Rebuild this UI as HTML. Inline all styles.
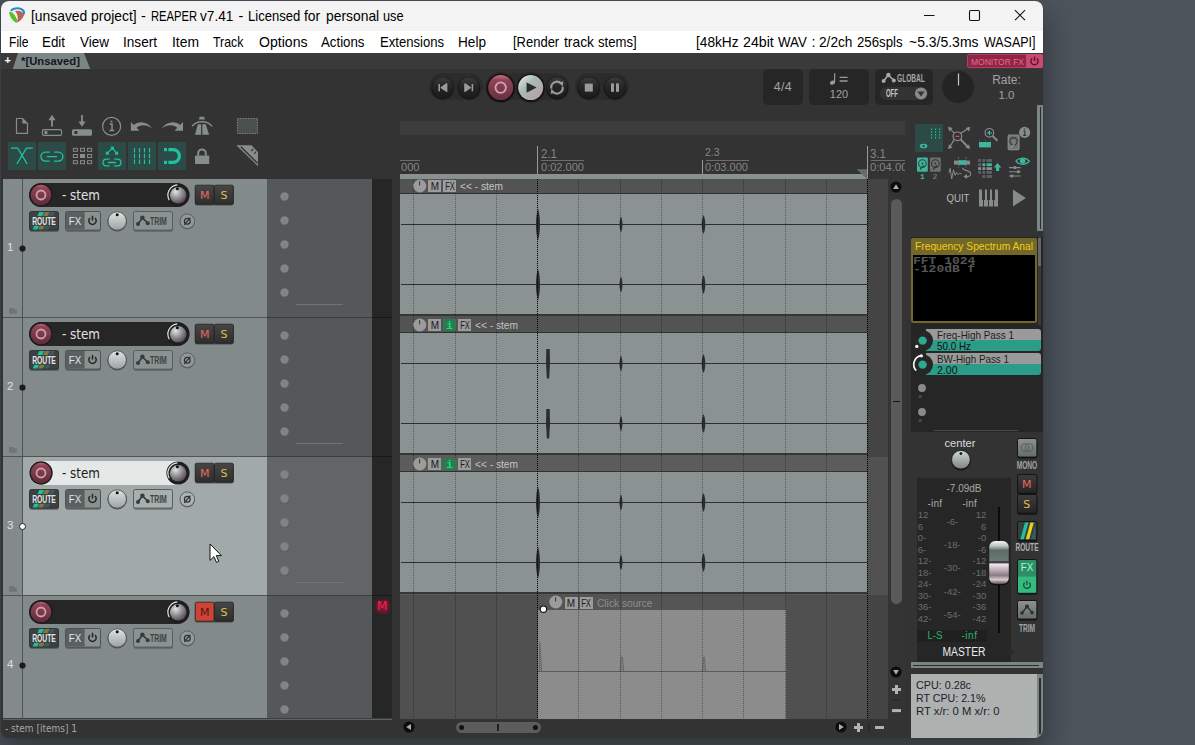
<!DOCTYPE html>
<html lang="en"><head><meta charset="utf-8"><title>[unsaved project] - REAPER v7.41</title>
<style>
html,body{margin:0;padding:0}
body{width:1195px;height:745px;overflow:hidden;background:#4d545c;position:relative;font-family:"Liberation Sans",sans-serif}
#win{position:absolute;left:1px;top:1px;width:1042px;height:737px;border-radius:8px;overflow:hidden;background:#333;box-shadow:0 12px 32px 3px rgba(0,0,0,.36),0 0 1px rgba(0,0,0,.3)}
#o{position:absolute;left:-1px;top:-1px;width:1195px;height:745px}
#o div,#o svg{position:absolute;box-sizing:border-box}
#o svg{overflow:visible}
.t{margin:0;padding:0}
</style></head><body>
<div id="win"><div id="o">
<div style="left:0px;top:0px;width:1195px;height:31px;background:#f3f3f3;"></div>
<svg style="left:9px;top:7px;" width="16" height="16" viewBox="0 0 16 16">
<path d="M1.200 3.400 C3.500 -0.600 12 -1.200 15.400 3.200 C16 4.400 16.100 6 15.800 7.500 L14 6.800 C14.200 5.400 13.600 4.400 12.600 3.600 C9.600 1.400 5.400 1.800 2.800 4.200 Z" fill="#1f8ad0"/>
<path d="M0.300 4.600 C2.500 4.200 6 7.600 8 12.400 C8.200 14 7.600 15.400 7 15.800 C4 14.600 -0.200 9 0.300 4.600 Z" fill="#5cc02c"/>
<path d="M6.100 4.300 C9.600 3 13.600 4.400 15.200 7.600 C14.400 11 11 14.600 7.400 16 C9.400 12 9.400 8 6.100 4.300 Z" fill="#ba634f"/>
</svg>
<div id="title0" class="t" style="top:6.75px;font:normal 14.5px/18.5px 'Liberation Sans',sans-serif;color:#000;white-space:nowrap;left:30.9px;transform:scaleX(0.9562);transform-origin:0 50%;">[unsaved project]</div>
<div id="title1" class="t" style="top:6.75px;font:normal 14.5px/18.5px 'Liberation Sans',sans-serif;color:#000;white-space:nowrap;left:140.9px;">-</div>
<div id="title2" class="t" style="top:6.75px;font:normal 14.5px/18.5px 'Liberation Sans',sans-serif;color:#000;white-space:nowrap;left:150.5px;transform:scaleX(0.7713);transform-origin:0 50%;">REAPER</div>
<div id="title3" class="t" style="top:6.75px;font:normal 14.5px/18.5px 'Liberation Sans',sans-serif;color:#000;white-space:nowrap;left:199.8px;transform:scaleX(0.9413);transform-origin:0 50%;">v7.41</div>
<div id="title4" class="t" style="top:6.75px;font:normal 14.5px/18.5px 'Liberation Sans',sans-serif;color:#000;white-space:nowrap;left:238.4px;">-</div>
<div id="title5" class="t" style="top:6.75px;font:normal 14.5px/18.5px 'Liberation Sans',sans-serif;color:#000;white-space:nowrap;left:247.6px;transform:scaleX(0.8993);transform-origin:0 50%;">Licensed</div>
<div id="title6" class="t" style="top:6.75px;font:normal 14.5px/18.5px 'Liberation Sans',sans-serif;color:#000;white-space:nowrap;left:304.4px;transform:scaleX(0.9573);transform-origin:0 50%;">for</div>
<div id="title7" class="t" style="top:6.75px;font:normal 14.5px/18.5px 'Liberation Sans',sans-serif;color:#000;white-space:nowrap;left:325.8px;transform:scaleX(0.9564);transform-origin:0 50%;">personal</div>
<div id="title8" class="t" style="top:6.75px;font:normal 14.5px/18.5px 'Liberation Sans',sans-serif;color:#000;white-space:nowrap;left:382.8px;transform:scaleX(0.8807);transform-origin:0 50%;">use</div>
<svg style="left:919px;top:5px;" width="110" height="22" viewBox="0 0 110 22">
<path d="M5 10.5 H15.5" stroke="#111" stroke-width="1.1" fill="none"/>
<rect x="50.5" y="5.5" width="10" height="10" rx="1.2" stroke="#111" stroke-width="1.1" fill="none"/>
<path d="M96 5.2 L106 15.2 M106 5.2 L96 15.2" stroke="#111" stroke-width="1.1" fill="none"/>
</svg>
<div style="left:0px;top:31px;width:1195px;height:22px;background:#fff;"></div>
<div id="menu0" class="t" style="top:32.75px;font:normal 14.5px/18.5px 'Liberation Sans',sans-serif;color:#000;white-space:nowrap;left:8.5px;transform:scaleX(0.8342);transform-origin:0 50%;">File</div>
<div id="menu1" class="t" style="top:32.75px;font:normal 14.5px/18.5px 'Liberation Sans',sans-serif;color:#000;white-space:nowrap;left:42px;transform:scaleX(0.92);transform-origin:0 50%;">Edit</div>
<div id="menu2" class="t" style="top:32.75px;font:normal 14.5px/18.5px 'Liberation Sans',sans-serif;color:#000;white-space:nowrap;left:79.5px;transform:scaleX(0.9303);transform-origin:0 50%;">View</div>
<div id="menu3" class="t" style="top:32.75px;font:normal 14.5px/18.5px 'Liberation Sans',sans-serif;color:#000;white-space:nowrap;left:122.5px;transform:scaleX(0.9375);transform-origin:0 50%;">Insert</div>
<div id="menu4" class="t" style="top:32.75px;font:normal 14.5px/18.5px 'Liberation Sans',sans-serif;color:#000;white-space:nowrap;left:171.5px;transform:scaleX(0.9573);transform-origin:0 50%;">Item</div>
<div id="menu5" class="t" style="top:32.75px;font:normal 14.5px/18.5px 'Liberation Sans',sans-serif;color:#000;white-space:nowrap;left:213px;transform:scaleX(0.8539);transform-origin:0 50%;">Track</div>
<div id="menu6" class="t" style="top:32.75px;font:normal 14.5px/18.5px 'Liberation Sans',sans-serif;color:#000;white-space:nowrap;left:258.5px;transform:scaleX(0.9703);transform-origin:0 50%;">Options</div>
<div id="menu7" class="t" style="top:32.75px;font:normal 14.5px/18.5px 'Liberation Sans',sans-serif;color:#000;white-space:nowrap;left:321px;transform:scaleX(0.9146);transform-origin:0 50%;">Actions</div>
<div id="menu8" class="t" style="top:32.75px;font:normal 14.5px/18.5px 'Liberation Sans',sans-serif;color:#000;white-space:nowrap;left:380px;transform:scaleX(0.9022);transform-origin:0 50%;">Extensions</div>
<div id="menu9" class="t" style="top:32.75px;font:normal 14.5px/18.5px 'Liberation Sans',sans-serif;color:#000;white-space:nowrap;left:458px;transform:scaleX(0.9387);transform-origin:0 50%;">Help</div>
<div id="menu10" class="t" style="top:32.75px;font:normal 14.5px/18.5px 'Liberation Sans',sans-serif;color:#000;white-space:nowrap;left:512.7px;transform:scaleX(0.8955);transform-origin:0 50%;">[Render</div>
<div id="menu11" class="t" style="top:32.75px;font:normal 14.5px/18.5px 'Liberation Sans',sans-serif;color:#000;white-space:nowrap;left:563.8px;transform:scaleX(0.9547);transform-origin:0 50%;">track</div>
<div id="menu12" class="t" style="top:32.75px;font:normal 14.5px/18.5px 'Liberation Sans',sans-serif;color:#000;white-space:nowrap;left:597.7px;transform:scaleX(0.9063);transform-origin:0 50%;">stems]</div>
<div id="menur0" class="t" style="top:32.75px;font:normal 14.5px/18.5px 'Liberation Sans',sans-serif;color:#000;white-space:nowrap;left:695.8px;transform:scaleX(0.9437);transform-origin:0 50%;">[48kHz</div>
<div id="menur1" class="t" style="top:32.75px;font:normal 14.5px/18.5px 'Liberation Sans',sans-serif;color:#000;white-space:nowrap;left:742.5px;transform:scaleX(0.9792);transform-origin:0 50%;">24bit</div>
<div id="menur2" class="t" style="top:32.75px;font:normal 14.5px/18.5px 'Liberation Sans',sans-serif;color:#000;white-space:nowrap;left:778px;transform:scaleX(0.9166);transform-origin:0 50%;">WAV</div>
<div id="menur3" class="t" style="top:32.75px;font:normal 14.5px/18.5px 'Liberation Sans',sans-serif;color:#000;white-space:nowrap;left:811.4px;">:</div>
<div id="menur4" class="t" style="top:32.75px;font:normal 14.5px/18.5px 'Liberation Sans',sans-serif;color:#000;white-space:nowrap;left:818.6px;transform:scaleX(0.9441);transform-origin:0 50%;">2/2ch</div>
<div id="menur5" class="t" style="top:32.75px;font:normal 14.5px/18.5px 'Liberation Sans',sans-serif;color:#000;white-space:nowrap;left:857.1px;transform:scaleX(0.9123);transform-origin:0 50%;">256spls</div>
<div id="menur6" class="t" style="top:32.75px;font:normal 14.5px/18.5px 'Liberation Sans',sans-serif;color:#000;white-space:nowrap;left:908.5px;transform:scaleX(0.9634);transform-origin:0 50%;">~5.3/5.3ms</div>
<div id="menur7" class="t" style="top:32.75px;font:normal 14.5px/18.5px 'Liberation Sans',sans-serif;color:#000;white-space:nowrap;left:983.9px;transform:scaleX(0.8599);transform-origin:0 50%;">WASAPI]</div>
<div style="left:0px;top:53px;width:1195px;height:16px;background:#3a3a3a;"></div>
<svg style="left:0px;top:53px;" width="100" height="16" viewBox="0 0 100 16"><path d="M18 0 H84 L90.2 16 H12.8 Z" fill="#7c8685"/></svg>
<div id="t31" class="t" style="top:53.3px;font:bold 11px/15px 'Liberation Sans',sans-serif;color:#fff;white-space:nowrap;left:4.6px;">+</div>
<div id="tab" class="t" style="top:53.9px;font:bold 11px/15px 'Liberation Sans',sans-serif;color:#15151f;white-space:nowrap;left:20.8px;transform:scaleX(1.0266);transform-origin:0 50%;">*[Unsaved]</div>
<div style="left:967px;top:54px;width:75.5px;height:14px;background:#8a2845;border-radius:2px;border:1px solid #b83a5e;"></div>
<div style="left:1026px;top:54px;width:16.5px;height:14px;background:#c84a70;border-radius:0 2px 2px 0;"></div>
<div id="monfx" class="t" style="top:54.55px;font:normal 9.5px/13.5px 'Liberation Sans',sans-serif;color:#f2668e;white-space:nowrap;left:971px;transform:scaleX(0.8912);transform-origin:0 50%;">MONITOR FX</div>
<svg style="left:1028px;top:55px;" width="13" height="12" viewBox="0 0 13 12"><path d="M4.2 3.4 A3.6 3.6 0 1 0 8.8 3.4" stroke="#5a1028" stroke-width="1.3" fill="none"/><path d="M6.5 1.6 V6" stroke="#5a1028" stroke-width="1.3"/></svg>
<svg style="left:420px;top:65px;" width="220" height="46" viewBox="0 0 220 46"><defs>
<linearGradient id="gdark" x1="0" y1="0" x2="0" y2="1"><stop offset="0" stop-color="#3a3a3a"/><stop offset="0.5" stop-color="#242424"/><stop offset="1" stop-color="#1c1c1c"/></linearGradient>
<linearGradient id="grec" x1="0" y1="0" x2="0" y2="1"><stop offset="0" stop-color="#c4707f"/><stop offset="0.2" stop-color="#8c4456"/><stop offset="1" stop-color="#663040"/></linearGradient>
<linearGradient id="gplay" x1="0" y1="0" x2="1" y2="1"><stop offset="0" stop-color="#e8f0ee"/><stop offset="0.4" stop-color="#a8bab4"/><stop offset="1" stop-color="#b89aa8"/></linearGradient>
</defs><rect x="9" y="8" width="54" height="27" rx="13.5" fill="#2c2c2c"/><rect x="66" y="8" width="82" height="27" rx="13.5" fill="#2c2c2c"/><rect x="155" y="8" width="54" height="27" rx="13.5" fill="#2c2c2c"/><circle cx="22.6" cy="22.6" r="12.799999999999999" fill="#2a2a2a"/><circle cx="22.6" cy="23.200000000000003" r="11.2" fill="#161616"/><circle cx="22.6" cy="22.6" r="10.399999999999999" fill="url(#gdark)"/><path d="M19.2 19 V26.2 M26.6 19 L21.4 22.6 L26.6 26.2 Z" fill="#9a9a9a" stroke="#9a9a9a" stroke-width="1.6" stroke-linejoin="round"/><circle cx="49" cy="22.6" r="12.799999999999999" fill="#2a2a2a"/><circle cx="49" cy="23.200000000000003" r="11.2" fill="#161616"/><circle cx="49" cy="22.6" r="10.399999999999999" fill="url(#gdark)"/><path d="M52.4 19 V26.2 M45 19 L50.2 22.6 L45 26.2 Z" fill="#9a9a9a" stroke="#9a9a9a" stroke-width="1.6" stroke-linejoin="round"/><circle cx="137" cy="22.6" r="12.799999999999999" fill="#2a2a2a"/><circle cx="137" cy="23.200000000000003" r="11.2" fill="#161616"/><circle cx="137" cy="22.6" r="10.399999999999999" fill="url(#gdark)"/><path d="M131.400 23.600 A5.700 5.700 0 0 1 141.200 18.600 M142.600 21.600 A5.700 5.700 0 0 1 132.800 26.600" stroke="#9a9a9a" stroke-width="2.100" fill="none"/><path d="M138.600 17.200 L143.400 16.400 L142.600 21.400 Z M135.400 28 L130.600 28.800 L131.400 23.800 Z" fill="#9a9a9a"/><circle cx="80.7" cy="22.6" r="15.6" fill="#2a2a2a"/><circle cx="80.7" cy="22.900000000000002" r="14.2" fill="#141012"/><circle cx="80.7" cy="22.6" r="12.5" fill="url(#grec)"/><circle cx="80.7" cy="22.6" r="5.2" stroke="#d8a0b0" stroke-width="1.8" fill="none"/><circle cx="110.7" cy="22.6" r="15.6" fill="#2a2a2a"/><circle cx="110.7" cy="22.900000000000002" r="14.2" fill="#141414"/><circle cx="110.7" cy="22.6" r="12.5" fill="url(#gplay)"/><path d="M106.6 17.4 L116.6 22.6 L106.6 27.8 Z" fill="#2a2a2a"/><circle cx="168.8" cy="22.6" r="12.799999999999999" fill="#2a2a2a"/><circle cx="168.8" cy="23.200000000000003" r="11.2" fill="#161616"/><circle cx="168.8" cy="22.6" r="10.399999999999999" fill="url(#gdark)"/><rect x="164.8" y="18.6" width="8" height="8" fill="#9a9a9a"/><circle cx="195" cy="22.6" r="12.799999999999999" fill="#2a2a2a"/><circle cx="195" cy="23.200000000000003" r="11.2" fill="#161616"/><circle cx="195" cy="22.6" r="10.399999999999999" fill="url(#gdark)"/><rect x="191" y="18.4" width="3" height="8.4" fill="#9a9a9a"/><rect x="196" y="18.4" width="3" height="8.4" fill="#9a9a9a"/></svg>
<div style="left:763px;top:69px;width:40px;height:36px;background:#262626;border-radius:5px;"></div>
<div id="ts44" class="t" style="top:78.75px;font:normal 12.5px/16.5px 'Liberation Sans',sans-serif;color:#a2a2a2;white-space:nowrap;left:633px;width:300px;text-align:center;transform:scaleX(1);transform-origin:50% 50%;letter-spacing:0.303px;">4/4</div>
<div style="left:809px;top:69px;width:60px;height:36px;background:#262626;border-radius:5px;"></div>
<svg style="left:828px;top:72px;" width="24" height="14" viewBox="0 0 24 14"><ellipse cx="4.4" cy="10.6" rx="2.6" ry="2" fill="#9a9a9a" transform="rotate(-20 4.4 10.6)"/><path d="M6.6 10.4 V1.2" stroke="#9a9a9a" stroke-width="1.2"/><path d="M11.6 5.4 H19.6 M11.6 9 H19.6" stroke="#9a9a9a" stroke-width="1.3"/></svg>
<div id="t35" class="t" style="top:87.0px;font:normal 11px/15px 'Liberation Sans',sans-serif;color:#a2a2a2;white-space:nowrap;left:689px;width:300px;text-align:center;">120</div>
<div style="left:875px;top:69px;width:57.5px;height:36px;background:#262626;border-radius:5px;"></div>
<svg style="left:881px;top:72px;" width="18" height="12" viewBox="0 0 18 12"><path d="M2.6 9 L7.2 3.2 L12.6 8" stroke="#a8a8a8" stroke-width="1.6" fill="none"/><circle cx="2.6" cy="9" r="2" fill="#a8a8a8"/><circle cx="7.4" cy="3" r="2.2" fill="#a8a8a8"/><circle cx="12.8" cy="8.4" r="2" fill="#a8a8a8"/></svg>
<div id="t36" class="t" style="top:71.7px;font:bold 10px/14px 'Liberation Sans',sans-serif;color:#a8a8a8;white-space:nowrap;left:897px;transform:scaleX(0.66);transform-origin:0 50%;">GLOBAL</div>
<div style="left:880px;top:87px;width:48px;height:13px;background:#333;border-radius:6.5px;"></div>
<div id="t37" class="t" style="top:86.35px;font:bold 10.5px/14.5px 'Liberation Sans',sans-serif;color:#c8c8c8;white-space:nowrap;left:885.7px;transform:scaleX(0.56);transform-origin:0 50%;">OFF</div>
<svg style="left:914px;top:87px;" width="14" height="13" viewBox="0 0 14 13"><circle cx="7" cy="6.5" r="6" fill="#8a8a8a"/><path d="M3.4 4.6 H10.6 L7 9.6 Z" fill="#333"/></svg>
<svg style="left:940px;top:69px;" width="36" height="36" viewBox="0 0 36 36"><circle cx="18" cy="18" r="16" fill="#242424"/><path d="M18.5 4.4 V16.4" stroke="#c8c8c8" stroke-width="1.2"/></svg>
<div id="t38" class="t" style="top:71.5px;font:normal 12px/16px 'Liberation Sans',sans-serif;color:#a2a2a2;white-space:nowrap;left:856.5px;width:300px;text-align:center;">Rate:</div>
<div id="t39" class="t" style="top:88.25px;font:normal 11.5px/15.5px 'Liberation Sans',sans-serif;color:#a2a2a2;white-space:nowrap;left:856.5px;width:300px;text-align:center;">1.0</div>
<svg style="left:8px;top:112px;" width="28" height="28" viewBox="0 0 28 28"><path d="M8.5 6.5 H14.6 L19.5 11.4 V21.4 H8.5 Z" stroke="#878d8d" stroke-width="1.2" fill="none"/><path d="M14.4 6.4 V11.6 H19.6 Z" fill="#878d8d"/></svg>
<svg style="left:38px;top:112px;" width="28" height="28" viewBox="0 0 28 28"><path d="M14 14.5 V6" stroke="#878d8d" stroke-width="1.8"/><path d="M10.4 8.2 L14 2.8 L17.6 8.2 Z" fill="#878d8d"/><rect x="4.4" y="17.6" width="19.2" height="5.8" rx="1.6" stroke="#878d8d" stroke-width="1.2" fill="none"/><rect x="6.4" y="19" width="3" height="3" fill="#878d8d"/></svg>
<svg style="left:68px;top:112px;" width="28" height="28" viewBox="0 0 28 28"><path d="M14 3 V11" stroke="#878d8d" stroke-width="1.8"/><path d="M10.4 9.4 L14 14.8 L17.6 9.4 Z" fill="#878d8d"/><rect x="4" y="17.2" width="20" height="6.6" rx="1.6" fill="#878d8d"/><rect x="6.4" y="19" width="3" height="3" fill="#333"/></svg>
<svg style="left:98px;top:112px;" width="28" height="28" viewBox="0 0 28 28"><circle cx="13.6" cy="14.4" r="9" stroke="#878d8d" stroke-width="1.2" fill="none"/><path d="M11.6 12 H14 V18.4 M11.4 18.6 H16.2" stroke="#878d8d" stroke-width="1.5" fill="none"/><rect x="12.6" y="8.6" width="1.8" height="1.8" fill="#878d8d"/></svg>
<svg style="left:128px;top:112px;" width="28" height="28" viewBox="0 0 28 28"><path d="M2.900 10.100 V18.800 H11.400 L8.600 15.800 C12 12.400 18 12.200 24.300 16.400 C19.500 9.600 11 8.400 5.800 13 Z" fill="#878d8d"/></svg>
<svg style="left:158px;top:112px;" width="28" height="28" viewBox="0 0 28 28"><path d="M25 10.100 V18.800 H16.500 L19.300 15.800 C15.900 12.400 9.900 12.200 3.600 16.400 C8.400 9.600 16.900 8.400 22.100 13 Z" fill="#878d8d"/></svg>
<svg style="left:188px;top:112px;" width="28" height="28" viewBox="0 0 28 28"><path d="M4 14.400 C8.400 8.200 19.600 8.200 24 14.400" stroke="#878d8d" stroke-width="1.3" fill="none"/><path d="M11.600 4.800 H16.200 L16.800 7.600 H11 Z" fill="#878d8d"/><path d="M9.800 12.200 H13.100 V22.700 H7 Z M14.300 12.200 H17.700 L21.100 22.700 H14.300 Z" fill="#878d8d"/></svg>
<svg style="left:237px;top:118px;" width="21" height="16" viewBox="0 0 21 16"><rect x="0.5" y="0.5" width="20" height="15" fill="#4b4f4f" stroke="#858585" stroke-width="1" stroke-dasharray="1.4 1.2"/></svg>
<svg style="left:8px;top:142px;" width="28" height="28" viewBox="0 0 28 28"><rect x="0" y="0" width="28" height="28" fill="#2d4b46"/><path d="M3 6.1 H9.7 L19.1 21.9 M24.8 6.1 H18.5 L8.9 21.9" stroke="#1dc2a0" stroke-width="1.25" fill="none"/></svg>
<svg style="left:38px;top:142px;" width="28" height="28" viewBox="0 0 28 28"><rect x="0" y="0" width="28" height="28" fill="#2d4b46"/><path d="M11.7 10.100 H7.4 A4.5 4.5 0 0 0 7.4 19.100 H11.700 M16 10.100 H20.4 A4.5 4.5 0 0 1 20.4 19.100 H16 M8.900 14.600 H19" stroke="#1dc2a0" stroke-width="1.35" fill="none"/></svg>
<svg style="left:68px;top:142px;" width="28" height="28" viewBox="0 0 28 28"><rect x="5.4" y="6.3" width="4" height="3" stroke="#878d8d" stroke-width="1" fill="none"/><rect x="12.5" y="6.3" width="4" height="3" stroke="#878d8d" stroke-width="1" fill="none"/><rect x="19.6" y="6.3" width="4" height="3" stroke="#878d8d" stroke-width="1" fill="none"/><rect x="5.4" y="12.5" width="4" height="3" stroke="#878d8d" stroke-width="1" fill="none"/><rect x="12.0" y="12.0" width="5" height="4" fill="#878d8d"/><rect x="19.6" y="12.5" width="4" height="3" stroke="#878d8d" stroke-width="1" fill="none"/><rect x="5.4" y="18.7" width="4" height="3" stroke="#878d8d" stroke-width="1" fill="none"/><rect x="12.5" y="18.7" width="4" height="3" stroke="#878d8d" stroke-width="1" fill="none"/><rect x="19.6" y="18.7" width="4" height="3" stroke="#878d8d" stroke-width="1" fill="none"/></svg>
<svg style="left:98px;top:142px;" width="28" height="28" viewBox="0 0 28 28"><rect x="0" y="0" width="28" height="28" fill="#2d4b46"/><path d="M9.300 11.200 L14.400 6.100 L18.600 11.200" stroke="#1dc2a0" stroke-width="1.2" fill="none"/><rect x="12.900" y="4.600" width="3" height="3" fill="#1dc2a0"/><rect x="7.800" y="9.700" width="3" height="3" fill="#1dc2a0"/><rect x="17.100" y="9.700" width="3" height="3" fill="#1dc2a0"/><path d="M11.600 17.100 H8.400 A3.400 3.400 0 0 0 8.400 23.900 H11.600 M16.200 17.100 H19.500 A3.400 3.400 0 0 1 19.500 23.900 H16.200 M10 20.500 H18" stroke="#1dc2a0" stroke-width="1.3" fill="none"/></svg>
<svg style="left:128px;top:142px;" width="28" height="28" viewBox="0 0 28 28"><rect x="0" y="0" width="28" height="28" fill="#2d4b46"/><path d="M6.5 6 V22.200" stroke="#1dc2a0" stroke-width="1.2" stroke-dasharray="4.400 1.400"/><path d="M11.5 6 V22.200" stroke="#1dc2a0" stroke-width="1.2" stroke-dasharray="4.400 1.400"/><path d="M16.5 6 V22.200" stroke="#1dc2a0" stroke-width="1.2" stroke-dasharray="4.400 1.400"/><path d="M21.5 6 V22.200" stroke="#1dc2a0" stroke-width="1.2" stroke-dasharray="4.400 1.400"/></svg>
<svg style="left:158px;top:142px;" width="28" height="28" viewBox="0 0 28 28"><rect x="0" y="0" width="28" height="28" fill="#2d4b46"/><path d="M10.4 7.6 H15 A6.4 6.4 0 0 1 15 20.4 H10.4" stroke="#1dc2a0" stroke-width="3.2" fill="none"/><rect x="6" y="6" width="3" height="3.2" fill="#1dc2a0"/><rect x="6" y="18.8" width="3" height="3.2" fill="#1dc2a0"/></svg>
<svg style="left:188px;top:142px;" width="28" height="28" viewBox="0 0 28 28"><rect x="7" y="13.400" width="14.200" height="8.700" rx="0.800" fill="#878d8d"/><path d="M10.200 13.600 V11.200 A3.800 3.800 0 0 1 17.800 11.200 V13.600" stroke="#878d8d" stroke-width="2" fill="none"/></svg>
<svg style="left:236px;top:144px;" width="24" height="24" viewBox="0 0 24 24"><path d="M0.300 1.300 H15.500 L22 8 V22.300 Z" fill="#878d8d"/><path d="M4.800 2.700 L21.500 19.200" stroke="#333" stroke-width="1.4"/><path d="M15.200 7 L17.400 4.800 M18 9.800 L20.200 7.600" stroke="#333" stroke-width="1.1"/></svg>
<svg width="0" height="0" style="left:0;top:0"><defs>
<radialGradient id="kvol" cx="0.35" cy="0.3" r="0.8"><stop offset="0" stop-color="#e0e4e4"/><stop offset="0.45" stop-color="#94969a"/><stop offset="1" stop-color="#4c3c46"/></radialGradient>
<linearGradient id="kpan" x1="0" y1="0" x2="0" y2="1"><stop offset="0" stop-color="#dfe3e2"/><stop offset="1" stop-color="#9ba3a2"/></linearGradient>
<linearGradient id="krec" x1="0" y1="0" x2="0" y2="1"><stop offset="0" stop-color="#c46674"/><stop offset="0.14" stop-color="#904456"/><stop offset="0.5" stop-color="#7a3a4a"/><stop offset="1" stop-color="#5e2c3a"/></linearGradient>
<linearGradient id="gms" x1="0" y1="0" x2="0" y2="1"><stop offset="0" stop-color="#464646"/><stop offset="1" stop-color="#2e2e2e"/></linearGradient>
</defs></svg>
<div style="left:3px;top:179px;width:389px;height:540px;background:#333;"></div>
<div style="left:3px;top:179px;width:19px;height:138px;background:#838b8a;"></div>
<div style="left:22px;top:179px;width:1px;height:138px;background:#4f5554;"></div>
<div style="left:23px;top:179px;width:244px;height:138px;background:#838b8a;"></div>
<div style="left:267px;top:179px;width:105px;height:138px;background:#545858;"></div>
<div style="left:372px;top:179px;width:20px;height:138px;background:#262626;"></div>
<div style="left:3px;top:317px;width:264px;height:1px;background:#4f5554;"></div>
<div style="left:267px;top:317px;width:105px;height:1px;background:#3a3e3e;"></div>
<div style="left:372px;top:317px;width:20px;height:1px;background:#191919;"></div>
<div id="t40" class="t" style="top:240.25px;font:normal 11.5px/15.5px 'Liberation Sans',sans-serif;color:#dde1e1;white-space:nowrap;left:7px;">1</div>
<svg style="left:18px;top:243.6px;" width="9" height="9" viewBox="0 0 9 9"><circle cx="4.5" cy="4.5" r="3.1" fill="#1c1c1c"/></svg>
<svg style="left:9px;top:308px;" width="8" height="6" viewBox="0 0 8 6"><path d="M0 0.100 H4 L5.600 1.500 H7.900 V5.800 H0 Z" fill="#6e7675"/></svg>
<div style="left:29px;top:183px;width:160px;height:24px;background:#262626;border-radius:12px;"></div>
<svg style="left:29px;top:183px;" width="24" height="24" viewBox="0 0 24 24"><circle cx="12" cy="12" r="11.700" fill="#1c1c1c"/><circle cx="12" cy="12" r="10.300" fill="url(#krec)"/><circle cx="12" cy="12" r="4.5" stroke="#cfa0ac" stroke-width="1.8" fill="none"/></svg>
<div id="tn0" class="t" style="top:186.0px;font:normal 14px/18px 'DejaVu Sans','Liberation Sans',sans-serif;color:#e2e2e2;white-space:nowrap;left:62px;transform:scaleX(0.853);transform-origin:0 50%;">- stem</div>
<svg style="left:165.5px;top:183px;" width="24" height="24" viewBox="0 0 24 24"><circle cx="12" cy="12" r="11.6" fill="#1e1e1e"/><circle cx="12.2" cy="12.300" r="8.300" fill="url(#kvol)"/><path d="M3.300 17.200 A10.200 10.200 0 0 1 11.400 1.900" stroke="#e8e8e8" stroke-width="1.2" fill="none"/><circle cx="11.400" cy="5.700" r="1.500" fill="#111"/></svg>
<svg style="left:195px;top:185px;" width="40" height="21" viewBox="0 0 40 21"><rect x="0" y="1" width="38.6" height="19.6" rx="2" fill="#1a1a1a" opacity="0.55"/><rect x="0.2" y="0.200" width="19" height="19" rx="1.5" fill="url(#gms)" stroke="#222" stroke-width="0.8"/><rect x="19.4" y="0.200" width="19" height="19" rx="1.5" fill="url(#gms)" stroke="#222" stroke-width="0.8"/></svg>
<div id="t42" class="t" style="top:187.5px;font:normal 11px/15px 'DejaVu Sans','Liberation Sans',sans-serif;color:#e46a5e;white-space:nowrap;left:54.69999999999999px;width:300px;text-align:center;">M</div>
<div id="t43" class="t" style="top:187.5px;font:normal 11px/15px 'DejaVu Sans','Liberation Sans',sans-serif;color:#e0c050;white-space:nowrap;left:74px;width:300px;text-align:center;">S</div>
<svg style="left:29px;top:211px;" width="31" height="21" viewBox="0 0 31 21"><rect x="0.5" y="1.4" width="29.4" height="19.4" rx="2" fill="#2a2e2e" opacity="0.6"/><rect x="0.5" y="0.5" width="29" height="18.6" rx="1.8" fill="#3b4040" stroke="#2a2d2d" stroke-width="0.8"/><path d="M10.2 1 H15 L13.2 5 H8.400 Z" fill="#1dbf9f"/><path d="M15.8 1 H20.6 L18.8 5 H14 Z" fill="#7d7a3c"/><path d="M21.4 1 H26 L24.2 5 H19.6 Z" fill="#3a5a66"/><path d="M5.200 14.800 H10 L8.400 18.600 H3.600 Z" fill="#1dbf9f"/><path d="M10.800 14.800 H15.600 L14 18.600 H9.200 Z" fill="#7d7a3c"/><path d="M16.400 14.800 H21.200 L19.600 18.600 H14.800 Z" fill="#3a5a66"/></svg>
<div id="t44" class="t" style="top:213.85px;font:bold 11.5px/15.5px 'Liberation Sans',sans-serif;color:#e4e4e4;white-space:nowrap;left:-106px;width:300px;text-align:center;transform:scaleX(0.59);transform-origin:50% 50%;">ROUTE</div>
<svg style="left:65px;top:211px;" width="37" height="21" viewBox="0 0 37 21"><rect x="0.5" y="1.4" width="35.4" height="19.4" rx="2" fill="#3a3e3e" opacity="0.55"/><rect x="0.5" y="0.5" width="35" height="18.6" rx="1.8" fill="#8a9291" stroke="#4e5454" stroke-width="1"/><path d="M1 1 H19.6 V18.600 H1 Z" fill="#5a5f5f"/><path d="M25 7 A3.700 3.700 0 1 0 30 7" stroke="#222626" stroke-width="1.5" fill="none"/><path d="M27.5 4.800 V9.600" stroke="#222626" stroke-width="1.5"/></svg>
<div id="t45" class="t" style="top:213.65px;font:normal 11.5px/15.5px 'Liberation Sans',sans-serif;color:#e6e6e6;white-space:nowrap;left:-75px;width:300px;text-align:center;transform:scaleX(0.85);transform-origin:50% 50%;">FX</div>
<svg style="left:107px;top:211px;" width="21" height="21" viewBox="0 0 21 21"><circle cx="10.2" cy="10.6" r="9.8" fill="#4a504f"/><circle cx="10.2" cy="10" r="9.2" fill="url(#kpan)" stroke="#4a504f" stroke-width="0.8"/><circle cx="10.2" cy="3.800" r="1.5" fill="#111"/></svg>
<svg style="left:133px;top:211px;" width="41" height="21" viewBox="0 0 41 21"><rect x="0.5" y="1.4" width="39.4" height="19.4" rx="2" fill="#3a3e3e" opacity="0.5"/><rect x="0.5" y="0.5" width="39" height="18.6" rx="1.8" fill="#8b9392" stroke="#585e5d" stroke-width="1"/><path d="M5 13 L9.4 6.800 L14.6 12" stroke="#363c3c" stroke-width="1.7" fill="none"/><circle cx="5" cy="13" r="2" fill="#363c3c"/><circle cx="9.4" cy="6.6" r="2.200" fill="#363c3c"/><circle cx="14.8" cy="12.2" r="2" fill="#363c3c"/></svg>
<div id="t46" class="t" style="top:213.85px;font:bold 11.5px/15.5px 'Liberation Sans',sans-serif;color:#3c4242;white-space:nowrap;left:150.3px;transform:scaleX(0.6);transform-origin:0 50%;">TRIM</div>
<svg style="left:178.5px;top:212.5px;" width="17" height="17" viewBox="0 0 17 17"><circle cx="8.3" cy="8.800" r="7.6" fill="#4a504f" opacity="0.6"/><circle cx="8.3" cy="8.200" r="7.3" fill="#929a99" stroke="#5a605f" stroke-width="1"/><circle cx="8.3" cy="8.2" r="2.900" stroke="#2e3232" stroke-width="1.2" fill="none"/><path d="M5.200 11.800 L11.400 4.600" stroke="#2e3232" stroke-width="1.2"/></svg>
<svg style="left:279.5px;top:192.4px;" width="9" height="9" viewBox="0 0 9 9"><circle cx="4.5" cy="4.5" r="4.2" fill="#838383"/></svg>
<svg style="left:279.5px;top:216.4px;" width="9" height="9" viewBox="0 0 9 9"><circle cx="4.5" cy="4.5" r="4.2" fill="#838383"/></svg>
<svg style="left:279.5px;top:240.4px;" width="9" height="9" viewBox="0 0 9 9"><circle cx="4.5" cy="4.5" r="4.2" fill="#838383"/></svg>
<svg style="left:279.5px;top:264.4px;" width="9" height="9" viewBox="0 0 9 9"><circle cx="4.5" cy="4.5" r="4.2" fill="#838383"/></svg>
<svg style="left:279.5px;top:288.4px;" width="9" height="9" viewBox="0 0 9 9"><circle cx="4.5" cy="4.5" r="4.2" fill="#838383"/></svg>
<div style="left:296px;top:304px;width:47px;height:1px;background:#6f7474;"></div>
<div style="left:3px;top:318px;width:19px;height:138px;background:#838b8a;"></div>
<div style="left:22px;top:318px;width:1px;height:138px;background:#4f5554;"></div>
<div style="left:23px;top:318px;width:244px;height:138px;background:#838b8a;"></div>
<div style="left:267px;top:318px;width:105px;height:138px;background:#545858;"></div>
<div style="left:372px;top:318px;width:20px;height:138px;background:#262626;"></div>
<div style="left:3px;top:456px;width:264px;height:1px;background:#4f5554;"></div>
<div style="left:267px;top:456px;width:105px;height:1px;background:#3a3e3e;"></div>
<div style="left:372px;top:456px;width:20px;height:1px;background:#191919;"></div>
<div id="t47" class="t" style="top:379.25px;font:normal 11.5px/15.5px 'Liberation Sans',sans-serif;color:#dde1e1;white-space:nowrap;left:7px;">2</div>
<svg style="left:18px;top:382.6px;" width="9" height="9" viewBox="0 0 9 9"><circle cx="4.5" cy="4.5" r="3.1" fill="#1c1c1c"/></svg>
<svg style="left:9px;top:447px;" width="8" height="6" viewBox="0 0 8 6"><path d="M0 0.100 H4 L5.600 1.500 H7.900 V5.800 H0 Z" fill="#6e7675"/></svg>
<div style="left:29px;top:322px;width:160px;height:24px;background:#262626;border-radius:12px;"></div>
<svg style="left:29px;top:322px;" width="24" height="24" viewBox="0 0 24 24"><circle cx="12" cy="12" r="11.700" fill="#1c1c1c"/><circle cx="12" cy="12" r="10.300" fill="url(#krec)"/><circle cx="12" cy="12" r="4.5" stroke="#cfa0ac" stroke-width="1.8" fill="none"/></svg>
<div id="tn1" class="t" style="top:325.0px;font:normal 14px/18px 'DejaVu Sans','Liberation Sans',sans-serif;color:#e2e2e2;white-space:nowrap;left:62px;transform:scaleX(0.853);transform-origin:0 50%;">- stem</div>
<svg style="left:165.5px;top:322px;" width="24" height="24" viewBox="0 0 24 24"><circle cx="12" cy="12" r="11.6" fill="#1e1e1e"/><circle cx="12.2" cy="12.300" r="8.300" fill="url(#kvol)"/><path d="M3.300 17.200 A10.200 10.200 0 0 1 11.400 1.900" stroke="#e8e8e8" stroke-width="1.2" fill="none"/><circle cx="11.400" cy="5.700" r="1.500" fill="#111"/></svg>
<svg style="left:195px;top:324px;" width="40" height="21" viewBox="0 0 40 21"><rect x="0" y="1" width="38.6" height="19.6" rx="2" fill="#1a1a1a" opacity="0.55"/><rect x="0.2" y="0.200" width="19" height="19" rx="1.5" fill="url(#gms)" stroke="#222" stroke-width="0.8"/><rect x="19.4" y="0.200" width="19" height="19" rx="1.5" fill="url(#gms)" stroke="#222" stroke-width="0.8"/></svg>
<div id="t49" class="t" style="top:326.5px;font:normal 11px/15px 'DejaVu Sans','Liberation Sans',sans-serif;color:#e46a5e;white-space:nowrap;left:54.69999999999999px;width:300px;text-align:center;">M</div>
<div id="t50" class="t" style="top:326.5px;font:normal 11px/15px 'DejaVu Sans','Liberation Sans',sans-serif;color:#e0c050;white-space:nowrap;left:74px;width:300px;text-align:center;">S</div>
<svg style="left:29px;top:350px;" width="31" height="21" viewBox="0 0 31 21"><rect x="0.5" y="1.4" width="29.4" height="19.4" rx="2" fill="#2a2e2e" opacity="0.6"/><rect x="0.5" y="0.5" width="29" height="18.6" rx="1.8" fill="#3b4040" stroke="#2a2d2d" stroke-width="0.8"/><path d="M10.2 1 H15 L13.2 5 H8.400 Z" fill="#1dbf9f"/><path d="M15.8 1 H20.6 L18.8 5 H14 Z" fill="#7d7a3c"/><path d="M21.4 1 H26 L24.2 5 H19.6 Z" fill="#3a5a66"/><path d="M5.200 14.800 H10 L8.400 18.600 H3.600 Z" fill="#1dbf9f"/><path d="M10.800 14.800 H15.600 L14 18.600 H9.200 Z" fill="#7d7a3c"/><path d="M16.400 14.800 H21.200 L19.600 18.600 H14.800 Z" fill="#3a5a66"/></svg>
<div id="t51" class="t" style="top:352.85px;font:bold 11.5px/15.5px 'Liberation Sans',sans-serif;color:#e4e4e4;white-space:nowrap;left:-106px;width:300px;text-align:center;transform:scaleX(0.59);transform-origin:50% 50%;">ROUTE</div>
<svg style="left:65px;top:350px;" width="37" height="21" viewBox="0 0 37 21"><rect x="0.5" y="1.4" width="35.4" height="19.4" rx="2" fill="#3a3e3e" opacity="0.55"/><rect x="0.5" y="0.5" width="35" height="18.6" rx="1.8" fill="#8a9291" stroke="#4e5454" stroke-width="1"/><path d="M1 1 H19.6 V18.600 H1 Z" fill="#5a5f5f"/><path d="M25 7 A3.700 3.700 0 1 0 30 7" stroke="#222626" stroke-width="1.5" fill="none"/><path d="M27.5 4.800 V9.600" stroke="#222626" stroke-width="1.5"/></svg>
<div id="t52" class="t" style="top:352.65px;font:normal 11.5px/15.5px 'Liberation Sans',sans-serif;color:#e6e6e6;white-space:nowrap;left:-75px;width:300px;text-align:center;transform:scaleX(0.85);transform-origin:50% 50%;">FX</div>
<svg style="left:107px;top:350px;" width="21" height="21" viewBox="0 0 21 21"><circle cx="10.2" cy="10.6" r="9.8" fill="#4a504f"/><circle cx="10.2" cy="10" r="9.2" fill="url(#kpan)" stroke="#4a504f" stroke-width="0.8"/><circle cx="10.2" cy="3.800" r="1.5" fill="#111"/></svg>
<svg style="left:133px;top:350px;" width="41" height="21" viewBox="0 0 41 21"><rect x="0.5" y="1.4" width="39.4" height="19.4" rx="2" fill="#3a3e3e" opacity="0.5"/><rect x="0.5" y="0.5" width="39" height="18.6" rx="1.8" fill="#8b9392" stroke="#585e5d" stroke-width="1"/><path d="M5 13 L9.4 6.800 L14.6 12" stroke="#363c3c" stroke-width="1.7" fill="none"/><circle cx="5" cy="13" r="2" fill="#363c3c"/><circle cx="9.4" cy="6.6" r="2.200" fill="#363c3c"/><circle cx="14.8" cy="12.2" r="2" fill="#363c3c"/></svg>
<div id="t53" class="t" style="top:352.85px;font:bold 11.5px/15.5px 'Liberation Sans',sans-serif;color:#3c4242;white-space:nowrap;left:150.3px;transform:scaleX(0.6);transform-origin:0 50%;">TRIM</div>
<svg style="left:178.5px;top:351.5px;" width="17" height="17" viewBox="0 0 17 17"><circle cx="8.3" cy="8.800" r="7.6" fill="#4a504f" opacity="0.6"/><circle cx="8.3" cy="8.200" r="7.3" fill="#929a99" stroke="#5a605f" stroke-width="1"/><circle cx="8.3" cy="8.2" r="2.900" stroke="#2e3232" stroke-width="1.2" fill="none"/><path d="M5.200 11.800 L11.400 4.600" stroke="#2e3232" stroke-width="1.2"/></svg>
<svg style="left:279.5px;top:331.4px;" width="9" height="9" viewBox="0 0 9 9"><circle cx="4.5" cy="4.5" r="4.2" fill="#838383"/></svg>
<svg style="left:279.5px;top:355.4px;" width="9" height="9" viewBox="0 0 9 9"><circle cx="4.5" cy="4.5" r="4.2" fill="#838383"/></svg>
<svg style="left:279.5px;top:379.4px;" width="9" height="9" viewBox="0 0 9 9"><circle cx="4.5" cy="4.5" r="4.2" fill="#838383"/></svg>
<svg style="left:279.5px;top:403.4px;" width="9" height="9" viewBox="0 0 9 9"><circle cx="4.5" cy="4.5" r="4.2" fill="#838383"/></svg>
<svg style="left:279.5px;top:427.4px;" width="9" height="9" viewBox="0 0 9 9"><circle cx="4.5" cy="4.5" r="4.2" fill="#838383"/></svg>
<div style="left:296px;top:443px;width:47px;height:1px;background:#6f7474;"></div>
<div style="left:3px;top:457px;width:19px;height:138px;background:#838b8a;"></div>
<div style="left:22px;top:457px;width:1px;height:138px;background:#4f5554;"></div>
<div style="left:23px;top:457px;width:244px;height:138px;background:#a2aaa9;"></div>
<div style="left:267px;top:457px;width:105px;height:138px;background:#616565;"></div>
<div style="left:372px;top:457px;width:20px;height:138px;background:#262626;"></div>
<div style="left:3px;top:595px;width:264px;height:1px;background:#4f5554;"></div>
<div style="left:267px;top:595px;width:105px;height:1px;background:#3a3e3e;"></div>
<div style="left:372px;top:595px;width:20px;height:1px;background:#191919;"></div>
<div id="t54" class="t" style="top:518.25px;font:normal 11.5px/15.5px 'Liberation Sans',sans-serif;color:#dde1e1;white-space:nowrap;left:7px;">3</div>
<svg style="left:18px;top:521.6px;" width="9" height="9" viewBox="0 0 9 9"><circle cx="4.5" cy="4.5" r="3" fill="#fff" stroke="#222" stroke-width="1"/></svg>
<svg style="left:9px;top:586px;" width="8" height="6" viewBox="0 0 8 6"><path d="M0 0.100 H4 L5.600 1.500 H7.900 V5.800 H0 Z" fill="#6e7675"/></svg>
<div style="left:29px;top:461px;width:160px;height:24px;background:#e4e8e7;border-radius:12px;"></div>
<svg style="left:29px;top:461px;" width="24" height="24" viewBox="0 0 24 24"><circle cx="12" cy="12" r="11.700" fill="#1c1c1c"/><circle cx="12" cy="12" r="10.300" fill="url(#krec)"/><circle cx="12" cy="12" r="4.5" stroke="#cfa0ac" stroke-width="1.8" fill="none"/></svg>
<div id="tn2" class="t" style="top:464.0px;font:normal 14px/18px 'DejaVu Sans','Liberation Sans',sans-serif;color:#1c1c1c;white-space:nowrap;left:62px;transform:scaleX(0.853);transform-origin:0 50%;">- stem</div>
<svg style="left:165.5px;top:461px;" width="24" height="24" viewBox="0 0 24 24"><circle cx="12" cy="12" r="11.6" fill="#1e1e1e"/><circle cx="12.2" cy="12.300" r="8.300" fill="url(#kvol)"/><path d="M3.300 17.200 A10.200 10.200 0 0 1 11.400 1.900" stroke="#e8e8e8" stroke-width="1.2" fill="none"/><circle cx="11.400" cy="5.700" r="1.500" fill="#111"/></svg>
<svg style="left:195px;top:463px;" width="40" height="21" viewBox="0 0 40 21"><rect x="0" y="1" width="38.6" height="19.6" rx="2" fill="#1a1a1a" opacity="0.55"/><rect x="0.2" y="0.200" width="19" height="19" rx="1.5" fill="url(#gms)" stroke="#222" stroke-width="0.8"/><rect x="19.4" y="0.200" width="19" height="19" rx="1.5" fill="url(#gms)" stroke="#222" stroke-width="0.8"/></svg>
<div id="t56" class="t" style="top:465.5px;font:normal 11px/15px 'DejaVu Sans','Liberation Sans',sans-serif;color:#e46a5e;white-space:nowrap;left:54.69999999999999px;width:300px;text-align:center;">M</div>
<div id="t57" class="t" style="top:465.5px;font:normal 11px/15px 'DejaVu Sans','Liberation Sans',sans-serif;color:#e0c050;white-space:nowrap;left:74px;width:300px;text-align:center;">S</div>
<svg style="left:29px;top:489px;" width="31" height="21" viewBox="0 0 31 21"><rect x="0.5" y="1.4" width="29.4" height="19.4" rx="2" fill="#2a2e2e" opacity="0.6"/><rect x="0.5" y="0.5" width="29" height="18.6" rx="1.8" fill="#3b4040" stroke="#2a2d2d" stroke-width="0.8"/><path d="M10.2 1 H15 L13.2 5 H8.400 Z" fill="#1dbf9f"/><path d="M15.8 1 H20.6 L18.8 5 H14 Z" fill="#7d7a3c"/><path d="M21.4 1 H26 L24.2 5 H19.6 Z" fill="#3a5a66"/><path d="M5.200 14.800 H10 L8.400 18.600 H3.600 Z" fill="#1dbf9f"/><path d="M10.800 14.800 H15.600 L14 18.600 H9.200 Z" fill="#7d7a3c"/><path d="M16.400 14.800 H21.200 L19.600 18.600 H14.800 Z" fill="#3a5a66"/></svg>
<div id="t58" class="t" style="top:491.85px;font:bold 11.5px/15.5px 'Liberation Sans',sans-serif;color:#e4e4e4;white-space:nowrap;left:-106px;width:300px;text-align:center;transform:scaleX(0.59);transform-origin:50% 50%;">ROUTE</div>
<svg style="left:65px;top:489px;" width="37" height="21" viewBox="0 0 37 21"><rect x="0.5" y="1.4" width="35.4" height="19.4" rx="2" fill="#3a3e3e" opacity="0.55"/><rect x="0.5" y="0.5" width="35" height="18.6" rx="1.8" fill="#8a9291" stroke="#4e5454" stroke-width="1"/><path d="M1 1 H19.6 V18.600 H1 Z" fill="#5a5f5f"/><path d="M25 7 A3.700 3.700 0 1 0 30 7" stroke="#222626" stroke-width="1.5" fill="none"/><path d="M27.5 4.800 V9.600" stroke="#222626" stroke-width="1.5"/></svg>
<div id="t59" class="t" style="top:491.65px;font:normal 11.5px/15.5px 'Liberation Sans',sans-serif;color:#e6e6e6;white-space:nowrap;left:-75px;width:300px;text-align:center;transform:scaleX(0.85);transform-origin:50% 50%;">FX</div>
<svg style="left:107px;top:489px;" width="21" height="21" viewBox="0 0 21 21"><circle cx="10.2" cy="10.6" r="9.8" fill="#4a504f"/><circle cx="10.2" cy="10" r="9.2" fill="url(#kpan)" stroke="#4a504f" stroke-width="0.8"/><circle cx="10.2" cy="3.800" r="1.5" fill="#111"/></svg>
<svg style="left:133px;top:489px;" width="41" height="21" viewBox="0 0 41 21"><rect x="0.5" y="1.4" width="39.4" height="19.4" rx="2" fill="#3a3e3e" opacity="0.5"/><rect x="0.5" y="0.5" width="39" height="18.6" rx="1.8" fill="#a8b0af" stroke="#585e5d" stroke-width="1"/><path d="M5 13 L9.4 6.800 L14.6 12" stroke="#363c3c" stroke-width="1.7" fill="none"/><circle cx="5" cy="13" r="2" fill="#363c3c"/><circle cx="9.4" cy="6.6" r="2.200" fill="#363c3c"/><circle cx="14.8" cy="12.2" r="2" fill="#363c3c"/></svg>
<div id="t60" class="t" style="top:491.85px;font:bold 11.5px/15.5px 'Liberation Sans',sans-serif;color:#3c4242;white-space:nowrap;left:150.3px;transform:scaleX(0.6);transform-origin:0 50%;">TRIM</div>
<svg style="left:178.5px;top:490.5px;" width="17" height="17" viewBox="0 0 17 17"><circle cx="8.3" cy="8.800" r="7.6" fill="#4a504f" opacity="0.6"/><circle cx="8.3" cy="8.200" r="7.3" fill="#adb5b4" stroke="#5a605f" stroke-width="1"/><circle cx="8.3" cy="8.2" r="2.900" stroke="#2e3232" stroke-width="1.2" fill="none"/><path d="M5.200 11.800 L11.400 4.600" stroke="#2e3232" stroke-width="1.2"/></svg>
<svg style="left:279.5px;top:470.4px;" width="9" height="9" viewBox="0 0 9 9"><circle cx="4.5" cy="4.5" r="4.2" fill="#838383"/></svg>
<svg style="left:279.5px;top:494.4px;" width="9" height="9" viewBox="0 0 9 9"><circle cx="4.5" cy="4.5" r="4.2" fill="#838383"/></svg>
<svg style="left:279.5px;top:518.4px;" width="9" height="9" viewBox="0 0 9 9"><circle cx="4.5" cy="4.5" r="4.2" fill="#838383"/></svg>
<svg style="left:279.5px;top:542.4px;" width="9" height="9" viewBox="0 0 9 9"><circle cx="4.5" cy="4.5" r="4.2" fill="#838383"/></svg>
<svg style="left:279.5px;top:566.4px;" width="9" height="9" viewBox="0 0 9 9"><circle cx="4.5" cy="4.5" r="4.2" fill="#838383"/></svg>
<div style="left:296px;top:582px;width:47px;height:1px;background:#6f7474;"></div>
<div style="left:3px;top:596px;width:19px;height:122px;background:#838b8a;"></div>
<div style="left:22px;top:596px;width:1px;height:122px;background:#4f5554;"></div>
<div style="left:23px;top:596px;width:244px;height:122px;background:#838b8a;"></div>
<div style="left:267px;top:596px;width:105px;height:122px;background:#545858;"></div>
<div style="left:372px;top:596px;width:20px;height:122px;background:#262626;"></div>
<div id="t61" class="t" style="top:657.25px;font:normal 11.5px/15.5px 'Liberation Sans',sans-serif;color:#dde1e1;white-space:nowrap;left:7px;">4</div>
<svg style="left:18px;top:660.6px;" width="9" height="9" viewBox="0 0 9 9"><circle cx="4.5" cy="4.5" r="3.1" fill="#1c1c1c"/></svg>
<div style="left:29px;top:600px;width:160px;height:24px;background:#262626;border-radius:12px;"></div>
<svg style="left:29px;top:600px;" width="24" height="24" viewBox="0 0 24 24"><circle cx="12" cy="12" r="11.700" fill="#1c1c1c"/><circle cx="12" cy="12" r="10.300" fill="url(#krec)"/><circle cx="12" cy="12" r="4.5" stroke="#cfa0ac" stroke-width="1.8" fill="none"/></svg>
<svg style="left:165.5px;top:600px;" width="24" height="24" viewBox="0 0 24 24"><circle cx="12" cy="12" r="11.6" fill="#1e1e1e"/><circle cx="12.2" cy="12.300" r="8.300" fill="url(#kvol)"/><path d="M3.300 17.200 A10.200 10.200 0 0 1 11.400 1.900" stroke="#e8e8e8" stroke-width="1.2" fill="none"/><circle cx="11.400" cy="5.700" r="1.500" fill="#111"/></svg>
<svg style="left:195px;top:602px;" width="40" height="21" viewBox="0 0 40 21"><rect x="0" y="1" width="38.6" height="19.6" rx="2" fill="#1a1a1a" opacity="0.55"/><rect x="0.2" y="0.200" width="19" height="19" rx="1.5" fill="#cc4438" stroke="#222" stroke-width="0.8"/><rect x="19.4" y="0.200" width="19" height="19" rx="1.5" fill="url(#gms)" stroke="#222" stroke-width="0.8"/></svg>
<div id="t62" class="t" style="top:604.5px;font:normal 11px/15px 'DejaVu Sans','Liberation Sans',sans-serif;color:#5a1410;white-space:nowrap;left:54.69999999999999px;width:300px;text-align:center;">M</div>
<div id="t63" class="t" style="top:604.5px;font:normal 11px/15px 'DejaVu Sans','Liberation Sans',sans-serif;color:#e0c050;white-space:nowrap;left:74px;width:300px;text-align:center;">S</div>
<svg style="left:29px;top:628px;" width="31" height="21" viewBox="0 0 31 21"><rect x="0.5" y="1.4" width="29.4" height="19.4" rx="2" fill="#2a2e2e" opacity="0.6"/><rect x="0.5" y="0.5" width="29" height="18.6" rx="1.8" fill="#3b4040" stroke="#2a2d2d" stroke-width="0.8"/><path d="M10.2 1 H15 L13.2 5 H8.400 Z" fill="#1dbf9f"/><path d="M15.8 1 H20.6 L18.8 5 H14 Z" fill="#7d7a3c"/><path d="M21.4 1 H26 L24.2 5 H19.6 Z" fill="#3a5a66"/><path d="M5.200 14.800 H10 L8.400 18.600 H3.600 Z" fill="#1dbf9f"/><path d="M10.800 14.800 H15.600 L14 18.600 H9.200 Z" fill="#7d7a3c"/><path d="M16.400 14.800 H21.200 L19.600 18.600 H14.800 Z" fill="#3a5a66"/></svg>
<div id="t64" class="t" style="top:630.85px;font:bold 11.5px/15.5px 'Liberation Sans',sans-serif;color:#e4e4e4;white-space:nowrap;left:-106px;width:300px;text-align:center;transform:scaleX(0.59);transform-origin:50% 50%;">ROUTE</div>
<svg style="left:65px;top:628px;" width="37" height="21" viewBox="0 0 37 21"><rect x="0.5" y="1.4" width="35.4" height="19.4" rx="2" fill="#3a3e3e" opacity="0.55"/><rect x="0.5" y="0.5" width="35" height="18.6" rx="1.8" fill="#8a9291" stroke="#4e5454" stroke-width="1"/><path d="M1 1 H19.6 V18.600 H1 Z" fill="#5a5f5f"/><path d="M25 7 A3.700 3.700 0 1 0 30 7" stroke="#222626" stroke-width="1.5" fill="none"/><path d="M27.5 4.800 V9.600" stroke="#222626" stroke-width="1.5"/></svg>
<div id="t65" class="t" style="top:630.65px;font:normal 11.5px/15.5px 'Liberation Sans',sans-serif;color:#e6e6e6;white-space:nowrap;left:-75px;width:300px;text-align:center;transform:scaleX(0.85);transform-origin:50% 50%;">FX</div>
<svg style="left:107px;top:628px;" width="21" height="21" viewBox="0 0 21 21"><circle cx="10.2" cy="10.6" r="9.8" fill="#4a504f"/><circle cx="10.2" cy="10" r="9.2" fill="url(#kpan)" stroke="#4a504f" stroke-width="0.8"/><circle cx="10.2" cy="3.800" r="1.5" fill="#111"/></svg>
<svg style="left:133px;top:628px;" width="41" height="21" viewBox="0 0 41 21"><rect x="0.5" y="1.4" width="39.4" height="19.4" rx="2" fill="#3a3e3e" opacity="0.5"/><rect x="0.5" y="0.5" width="39" height="18.6" rx="1.8" fill="#8b9392" stroke="#585e5d" stroke-width="1"/><path d="M5 13 L9.4 6.800 L14.6 12" stroke="#363c3c" stroke-width="1.7" fill="none"/><circle cx="5" cy="13" r="2" fill="#363c3c"/><circle cx="9.4" cy="6.6" r="2.200" fill="#363c3c"/><circle cx="14.8" cy="12.2" r="2" fill="#363c3c"/></svg>
<div id="t66" class="t" style="top:630.85px;font:bold 11.5px/15.5px 'Liberation Sans',sans-serif;color:#3c4242;white-space:nowrap;left:150.3px;transform:scaleX(0.6);transform-origin:0 50%;">TRIM</div>
<svg style="left:178.5px;top:629.5px;" width="17" height="17" viewBox="0 0 17 17"><circle cx="8.3" cy="8.800" r="7.6" fill="#4a504f" opacity="0.6"/><circle cx="8.3" cy="8.200" r="7.3" fill="#929a99" stroke="#5a605f" stroke-width="1"/><circle cx="8.3" cy="8.2" r="2.900" stroke="#2e3232" stroke-width="1.2" fill="none"/><path d="M5.200 11.800 L11.400 4.600" stroke="#2e3232" stroke-width="1.2"/></svg>
<svg style="left:279.5px;top:609.4px;" width="9" height="9" viewBox="0 0 9 9"><circle cx="4.5" cy="4.5" r="4.2" fill="#838383"/></svg>
<svg style="left:279.5px;top:633.4px;" width="9" height="9" viewBox="0 0 9 9"><circle cx="4.5" cy="4.5" r="4.2" fill="#838383"/></svg>
<svg style="left:279.5px;top:657.4px;" width="9" height="9" viewBox="0 0 9 9"><circle cx="4.5" cy="4.5" r="4.2" fill="#838383"/></svg>
<svg style="left:279.5px;top:681.4px;" width="9" height="9" viewBox="0 0 9 9"><circle cx="4.5" cy="4.5" r="4.2" fill="#838383"/></svg>
<svg style="left:279.5px;top:705.4px;" width="9" height="9" viewBox="0 0 9 9"><circle cx="4.5" cy="4.5" r="4.2" fill="#838383"/></svg>
<div style="left:376.5px;top:600.5px;width:11px;height:11px;background:#6c1a2e;border-radius:3px;box-shadow:0 0 2.5px 1.5px rgba(108,26,46,.85);"></div>
<div id="t67" class="t" style="top:598.3px;font:normal 12px/16px 'DejaVu Sans','Liberation Sans',sans-serif;color:#ff1a5e;white-space:nowrap;left:232.10000000000002px;width:300px;text-align:center;">M</div>
<div style="left:3px;top:718px;width:389px;height:1px;background:#3a3e3e;"></div>
<div style="left:3px;top:719px;width:389px;height:1px;background:#5e6363;"></div>
<div id="status" class="t" style="top:720.75px;font:normal 10.5px/14.5px 'DejaVu Sans','Liberation Sans',sans-serif;color:#a8a8a8;white-space:nowrap;left:5px;transform:scaleX(0.8556);transform-origin:0 50%;">- stem [items] 1</div>
<svg style="left:208.5px;top:543px;" width="14" height="21" viewBox="0 0 14 21"><path d="M1 1 V17.400 L4.900 13.600 L7.500 19.400 L9.800 18.400 L7.300 12.600 H12.400 Z" fill="#fff" stroke="#111" stroke-width="1" stroke-linejoin="round"/></svg>
<div style="left:400px;top:121px;width:505px;height:14px;background:#3c3c3c;"></div>
<div style="left:400px;top:160px;width:20px;height:1px;background:#6c6c6c;"></div>
<div id="r000" class="t" style="top:160.0px;font:normal 11px/15px 'Liberation Sans',sans-serif;color:#858585;white-space:nowrap;left:400.5px;transform:scaleX(1.0077);transform-origin:0 50%;">000</div>
<div style="left:537px;top:146px;width:1px;height:29px;background:#9a9a9a;"></div>
<div id="r12.1" class="t" style="top:146.3px;font:normal 12px/16px 'Liberation Sans',sans-serif;color:#858585;white-space:nowrap;left:540.8px;transform:scaleX(0.9588);transform-origin:0 50%;">2.1</div>
<div style="left:541px;top:160px;width:43px;height:1px;background:#6c6c6c;"></div>
<div id="r20:02.000" class="t" style="top:160.3px;font:normal 11px/15px 'Liberation Sans',sans-serif;color:#858585;white-space:nowrap;left:540.8px;transform:scaleX(1.004);transform-origin:0 50%;">0:02.000</div>
<div style="left:702px;top:160px;width:1px;height:15px;background:#9a9a9a;"></div>
<div id="r12.3" class="t" style="top:145.3px;font:normal 11px/15px 'Liberation Sans',sans-serif;color:#858585;white-space:nowrap;left:705.3px;transform:scaleX(0.9479);transform-origin:0 50%;">2.3</div>
<div style="left:705.5px;top:160px;width:43px;height:1px;background:#6c6c6c;"></div>
<div id="r20:03.000" class="t" style="top:160.3px;font:normal 11px/15px 'Liberation Sans',sans-serif;color:#858585;white-space:nowrap;left:705.3px;transform:scaleX(1.004);transform-origin:0 50%;">0:03.000</div>
<div style="left:867px;top:146px;width:1px;height:29px;background:#9a9a9a;"></div>
<div id="r13.1" class="t" style="top:146.3px;font:normal 12px/16px 'Liberation Sans',sans-serif;color:#858585;white-space:nowrap;left:870.3px;transform:scaleX(0.9588);transform-origin:0 50%;">3.1</div>
<div style="left:870.5px;top:160px;width:37.5px;height:1px;background:#6c6c6c;"></div>
<div id="r20:04.00" class="t" style="top:160.3px;font:normal 11px/15px 'Liberation Sans',sans-serif;color:#858585;white-space:nowrap;left:870.3px;transform:scaleX(1.0217);transform-origin:0 50%;">0:04.00</div>
<div style="left:905px;top:136px;width:6px;height:42px;background:#333;"></div>
<div style="left:400px;top:179px;width:488px;height:540px;background:#444;"></div>
<div style="left:400px;top:179px;width:467px;height:540px;background:#505050;"></div>
<div style="left:400px;top:457px;width:488px;height:138px;background:#515151;"></div>
<div style="left:400px;top:457px;width:467px;height:138px;background:#5c5c5c;"></div>
<div style="left:400px;top:177px;width:467px;height:16px;background:#535353;"></div>
<div style="left:400px;top:193px;width:467px;height:1px;background:#303232;"></div>
<div style="left:400px;top:194px;width:467px;height:120px;background:#8b9392;"></div>
<div style="left:400px;top:314px;width:467px;height:2px;background:#363636;"></div>
<div style="left:401px;top:224px;width:466px;height:1px;background:#2c3030;"></div>
<svg style="left:534.1px;top:207px;" width="8" height="35" viewBox="0 0 8 35"><path d="M4 1.6 C5.4 6 6 12 6 17.500 C6 23 5.4 29 4 33.4 C2.600 29 2 23 2 17.5 C2 12 2.600 6 4 1.6 Z" fill="#2a2e2e"/></svg>
<svg style="left:617.6px;top:216px;" width="6" height="17" viewBox="0 0 6 17"><path d="M3 0.400 C3.900 2.500 4.500 6 4.500 8.5 C4.500 11 3.900 14.500 3 16.600 C2.100 14.500 1.500 11 1.500 8.5 C1.500 6 2.100 2.500 3 0.400 Z" fill="#2a2e2e"/></svg>
<svg style="left:699.6px;top:214px;" width="7" height="21" viewBox="0 0 7 21"><path d="M3.5 1 C4.700 3.600 5.300 7 5.300 10.5 C5.300 14 4.700 17.400 3.500 20 C2.300 17.4 1.700 14 1.700 10.5 C1.700 7 2.300 3.600 3.500 1 Z" fill="#2a2e2e"/></svg>
<div style="left:401px;top:284px;width:466px;height:1px;background:#2c3030;"></div>
<svg style="left:534.1px;top:267px;" width="8" height="35" viewBox="0 0 8 35"><path d="M4 1.6 C5.4 6 6 12 6 17.500 C6 23 5.4 29 4 33.4 C2.600 29 2 23 2 17.5 C2 12 2.600 6 4 1.6 Z" fill="#2a2e2e"/></svg>
<svg style="left:617.6px;top:276px;" width="6" height="17" viewBox="0 0 6 17"><path d="M3 0.400 C3.900 2.500 4.500 6 4.500 8.5 C4.500 11 3.900 14.500 3 16.600 C2.100 14.500 1.500 11 1.500 8.5 C1.500 6 2.100 2.500 3 0.400 Z" fill="#2a2e2e"/></svg>
<svg style="left:699.6px;top:274px;" width="7" height="21" viewBox="0 0 7 21"><path d="M3.5 1 C4.700 3.600 5.300 7 5.300 10.5 C5.300 14 4.700 17.400 3.500 20 C2.300 17.4 1.700 14 1.700 10.5 C1.700 7 2.300 3.600 3.500 1 Z" fill="#2a2e2e"/></svg>
<div style="left:400px;top:316px;width:467px;height:16px;background:#535353;"></div>
<div style="left:400px;top:332px;width:467px;height:1px;background:#303232;"></div>
<div style="left:400px;top:333px;width:467px;height:120px;background:#8b9392;"></div>
<div style="left:400px;top:453px;width:467px;height:2px;background:#363636;"></div>
<div style="left:401px;top:363px;width:466px;height:1px;background:#2c3030;"></div>
<svg style="left:543.5px;top:346px;" width="8" height="35" viewBox="0 0 8 35"><path d="M2.300 3 H5.700 L6 17.500 L5.200 32 Q4 33.600 2.800 32 L2 17.500 Z" fill="#2a2e2e"/></svg>
<svg style="left:617.6px;top:355px;" width="6" height="17" viewBox="0 0 6 17"><path d="M3 0.400 C3.900 2.500 4.500 6 4.500 8.5 C4.500 11 3.900 14.500 3 16.600 C2.100 14.500 1.500 11 1.500 8.5 C1.500 6 2.100 2.500 3 0.400 Z" fill="#2a2e2e"/></svg>
<svg style="left:699.6px;top:353px;" width="7" height="21" viewBox="0 0 7 21"><path d="M3.5 1 C4.700 3.600 5.300 7 5.300 10.5 C5.300 14 4.700 17.400 3.500 20 C2.300 17.4 1.700 14 1.700 10.5 C1.700 7 2.300 3.600 3.500 1 Z" fill="#2a2e2e"/></svg>
<div style="left:401px;top:423px;width:466px;height:1px;background:#2c3030;"></div>
<svg style="left:543.5px;top:406px;" width="8" height="35" viewBox="0 0 8 35"><path d="M2.300 3 H5.700 L6 17.500 L5.200 32 Q4 33.600 2.800 32 L2 17.500 Z" fill="#2a2e2e"/></svg>
<svg style="left:617.6px;top:415px;" width="6" height="17" viewBox="0 0 6 17"><path d="M3 0.400 C3.900 2.500 4.500 6 4.500 8.5 C4.500 11 3.900 14.500 3 16.600 C2.100 14.500 1.500 11 1.500 8.5 C1.500 6 2.100 2.500 3 0.400 Z" fill="#2a2e2e"/></svg>
<svg style="left:699.6px;top:413px;" width="7" height="21" viewBox="0 0 7 21"><path d="M3.5 1 C4.700 3.600 5.300 7 5.300 10.5 C5.300 14 4.700 17.400 3.500 20 C2.300 17.4 1.700 14 1.700 10.5 C1.700 7 2.300 3.600 3.500 1 Z" fill="#2a2e2e"/></svg>
<div style="left:400px;top:455px;width:467px;height:16px;background:#5c5c5c;"></div>
<div style="left:400px;top:471px;width:467px;height:1px;background:#303232;"></div>
<div style="left:400px;top:472px;width:467px;height:120px;background:#8b9392;"></div>
<div style="left:400px;top:592px;width:467px;height:2px;background:#363636;"></div>
<div style="left:401px;top:502px;width:466px;height:1px;background:#2c3030;"></div>
<svg style="left:534.1px;top:485px;" width="8" height="35" viewBox="0 0 8 35"><path d="M4 1.6 C5.4 6 6 12 6 17.500 C6 23 5.4 29 4 33.4 C2.600 29 2 23 2 17.5 C2 12 2.600 6 4 1.6 Z" fill="#2a2e2e"/></svg>
<svg style="left:617.6px;top:494px;" width="6" height="17" viewBox="0 0 6 17"><path d="M3 0.400 C3.900 2.500 4.500 6 4.500 8.5 C4.500 11 3.900 14.500 3 16.600 C2.100 14.500 1.500 11 1.500 8.5 C1.500 6 2.100 2.500 3 0.400 Z" fill="#2a2e2e"/></svg>
<svg style="left:699.6px;top:492px;" width="7" height="21" viewBox="0 0 7 21"><path d="M3.5 1 C4.700 3.600 5.300 7 5.300 10.5 C5.300 14 4.700 17.400 3.500 20 C2.300 17.4 1.700 14 1.700 10.5 C1.700 7 2.300 3.600 3.500 1 Z" fill="#2a2e2e"/></svg>
<div style="left:401px;top:562px;width:466px;height:1px;background:#2c3030;"></div>
<svg style="left:534.1px;top:545px;" width="8" height="35" viewBox="0 0 8 35"><path d="M4 1.6 C5.4 6 6 12 6 17.500 C6 23 5.4 29 4 33.4 C2.600 29 2 23 2 17.5 C2 12 2.600 6 4 1.6 Z" fill="#2a2e2e"/></svg>
<svg style="left:617.6px;top:554px;" width="6" height="17" viewBox="0 0 6 17"><path d="M3 0.400 C3.900 2.500 4.500 6 4.500 8.5 C4.500 11 3.900 14.500 3 16.600 C2.100 14.500 1.500 11 1.500 8.5 C1.500 6 2.100 2.500 3 0.400 Z" fill="#2a2e2e"/></svg>
<svg style="left:699.6px;top:552px;" width="7" height="21" viewBox="0 0 7 21"><path d="M3.5 1 C4.700 3.600 5.300 7 5.300 10.5 C5.300 14 4.700 17.400 3.500 20 C2.300 17.4 1.700 14 1.700 10.5 C1.700 7 2.300 3.600 3.500 1 Z" fill="#2a2e2e"/></svg>
<div style="left:400px;top:594px;width:467px;height:1px;background:#5a5a5a;"></div>
<div style="left:538px;top:596px;width:247.5px;height:14.5px;background:#555;"></div>
<div style="left:538px;top:610px;width:247.5px;height:109px;background:#8c8c8c;"></div>
<div style="left:538px;top:671px;width:247.5px;height:1px;background:#5c5c5c;"></div>
<svg style="left:538px;top:640px;" width="250" height="33" viewBox="0 0 250 33"><path d="M1.4 31 L1.8 2 L3.6 31 M82 31 L83.2 17 L84.400 17 L85.8 31 M164.4 31 L165.6 17 L166.4 17 L167.6 31" stroke="#666" stroke-width="0.9" fill="#7e7e7e"/></svg>
<svg style="left:539px;top:605.1px;" width="9" height="9" viewBox="0 0 9 9"><circle cx="4.4" cy="4.2" r="3.2" fill="#fff" stroke="#111" stroke-width="1.1"/></svg>
<div style="left:400px;top:174px;width:467.5px;height:5px;background:#899190;"></div>
<svg style="left:856px;top:168px;" width="12" height="11" viewBox="0 0 12 11"><path d="M0.700 1.300 H11 V11 Z" fill="#666c6b"/></svg>
<svg style="left:400px;top:179px;" width="488" height="540" viewBox="0 0 488 540"><path d="M13.50 0 V540" stroke="#000" stroke-width="1" stroke-dasharray="1 1" opacity="0.36"/><path d="M55.50 0 V540" stroke="#000" stroke-width="1" stroke-dasharray="1 1" opacity="0.36"/><path d="M96.50 0 V540" stroke="#000" stroke-width="1" stroke-dasharray="1 1" opacity="0.36"/><path d="M137.50 0 V540" stroke="#000" stroke-width="1" stroke-dasharray="1 1" opacity="1"/><path d="M178.50 0 V540" stroke="#000" stroke-width="1" stroke-dasharray="1 1" opacity="0.36"/><path d="M220.50 0 V540" stroke="#000" stroke-width="1" stroke-dasharray="1 1" opacity="0.36"/><path d="M261.50 0 V540" stroke="#000" stroke-width="1" stroke-dasharray="1 1" opacity="0.36"/><path d="M302.50 0 V540" stroke="#000" stroke-width="1" stroke-dasharray="1 1" opacity="0.36"/><path d="M343.50 0 V540" stroke="#000" stroke-width="1" stroke-dasharray="1 1" opacity="0.36"/><path d="M385.50 0 V540" stroke="#000" stroke-width="1" stroke-dasharray="1 1" opacity="0.36"/><path d="M426.50 0 V540" stroke="#000" stroke-width="1" stroke-dasharray="1 1" opacity="0.36"/><path d="M467.50 0 V540" stroke="#000" stroke-width="1" stroke-dasharray="1 1" opacity="1"/></svg>
<svg style="left:412.5px;top:178.5px;" width="14" height="14" viewBox="0 0 14 14"><circle cx="6.8" cy="7" r="6.5" fill="#9c9c9c"/><path d="M6.6 2.2 V6.4" stroke="#333" stroke-width="1"/></svg>
<div style="left:428px;top:180px;width:13px;height:12px;background:#9c9c9c;"></div>
<div id="t76" class="t" style="top:178.95px;font:normal 10.5px/14.5px 'Liberation Sans',sans-serif;color:#1a1a1a;white-space:nowrap;left:284.5px;width:300px;text-align:center;transform:scaleX(0.95);transform-origin:50% 50%;">M</div>
<div style="left:443px;top:180px;width:13px;height:12px;background:#9c9c9c;"></div>
<div id="t77" class="t" style="top:178.95px;font:normal 10.5px/14.5px 'Liberation Sans',sans-serif;color:#1a1a1a;white-space:nowrap;left:299.5px;width:300px;text-align:center;transform:scaleX(0.72);transform-origin:50% 50%;">FX</div>
<div id="il577" class="t" style="top:179.35px;font:normal 10.5px/14.5px 'Liberation Sans',sans-serif;color:#c4c4c4;white-space:nowrap;left:460.3px;transform:scaleX(0.9694);transform-origin:0 50%;">&lt;&lt; - stem</div>
<svg style="left:412.5px;top:317.5px;" width="14" height="14" viewBox="0 0 14 14"><circle cx="6.8" cy="7" r="6.5" fill="#9c9c9c"/><path d="M6.6 2.2 V6.4" stroke="#333" stroke-width="1"/></svg>
<div style="left:428px;top:319px;width:13px;height:12px;background:#9c9c9c;"></div>
<div id="t79" class="t" style="top:317.95px;font:normal 10.5px/14.5px 'Liberation Sans',sans-serif;color:#1a1a1a;white-space:nowrap;left:284.5px;width:300px;text-align:center;transform:scaleX(0.95);transform-origin:50% 50%;">M</div>
<div style="left:443px;top:319px;width:13px;height:12px;background:#2c7a52;"></div>
<div id="t80" class="t" style="top:318.7px;font:bold 11px/15px 'Liberation Mono',monospace;color:#14e070;white-space:nowrap;left:299.5px;width:300px;text-align:center;">i</div>
<div style="left:458px;top:319px;width:13px;height:12px;background:#9c9c9c;"></div>
<div id="t81" class="t" style="top:317.95px;font:normal 10.5px/14.5px 'Liberation Sans',sans-serif;color:#1a1a1a;white-space:nowrap;left:314.5px;width:300px;text-align:center;transform:scaleX(0.72);transform-origin:50% 50%;">FX</div>
<div id="il716" class="t" style="top:318.35px;font:normal 10.5px/14.5px 'Liberation Sans',sans-serif;color:#c4c4c4;white-space:nowrap;left:475.3px;transform:scaleX(0.9694);transform-origin:0 50%;">&lt;&lt; - stem</div>
<svg style="left:412.5px;top:456.5px;" width="14" height="14" viewBox="0 0 14 14"><circle cx="6.8" cy="7" r="6.5" fill="#9c9c9c"/><path d="M6.6 2.2 V6.4" stroke="#333" stroke-width="1"/></svg>
<div style="left:428px;top:458px;width:13px;height:12px;background:#9c9c9c;"></div>
<div id="t83" class="t" style="top:456.95px;font:normal 10.5px/14.5px 'Liberation Sans',sans-serif;color:#1a1a1a;white-space:nowrap;left:284.5px;width:300px;text-align:center;transform:scaleX(0.95);transform-origin:50% 50%;">M</div>
<div style="left:443px;top:458px;width:13px;height:12px;background:#2c7a52;"></div>
<div id="t84" class="t" style="top:457.7px;font:bold 11px/15px 'Liberation Mono',monospace;color:#14e070;white-space:nowrap;left:299.5px;width:300px;text-align:center;">i</div>
<div style="left:458px;top:458px;width:13px;height:12px;background:#9c9c9c;"></div>
<div id="t85" class="t" style="top:456.95px;font:normal 10.5px/14.5px 'Liberation Sans',sans-serif;color:#1a1a1a;white-space:nowrap;left:314.5px;width:300px;text-align:center;transform:scaleX(0.72);transform-origin:50% 50%;">FX</div>
<div id="il855" class="t" style="top:457.35px;font:normal 10.5px/14.5px 'Liberation Sans',sans-serif;color:#c4c4c4;white-space:nowrap;left:475.3px;transform:scaleX(0.9694);transform-origin:0 50%;">&lt;&lt; - stem</div>
<svg style="left:549.4px;top:595.4px;" width="14" height="14" viewBox="0 0 14 14"><circle cx="6.8" cy="7" r="6.5" fill="#9c9c9c"/><path d="M6.6 2.2 V6.4" stroke="#333" stroke-width="1"/></svg>
<div style="left:564.9px;top:596.9px;width:13px;height:12px;background:#9c9c9c;"></div>
<div id="t87" class="t" style="top:595.85px;font:normal 10.5px/14.5px 'Liberation Sans',sans-serif;color:#1a1a1a;white-space:nowrap;left:421.4px;width:300px;text-align:center;transform:scaleX(0.95);transform-origin:50% 50%;">M</div>
<div style="left:579.9px;top:596.9px;width:13px;height:12px;background:#9c9c9c;"></div>
<div id="t88" class="t" style="top:595.85px;font:normal 10.5px/14.5px 'Liberation Sans',sans-serif;color:#1a1a1a;white-space:nowrap;left:436.4px;width:300px;text-align:center;transform:scaleX(0.72);transform-origin:50% 50%;">FX</div>
<div id="il1130" class="t" style="top:596.25px;font:normal 10.5px/14.5px 'Liberation Sans',sans-serif;color:#8e8e8e;white-space:nowrap;left:597.1999999999999px;transform:scaleX(0.9705);transform-origin:0 50%;">Click source</div>
<div style="left:888px;top:179px;width:17px;height:540px;background:#343434;"></div>
<div style="left:891px;top:199px;width:11px;height:405px;background:#5a5a5a;border-radius:5.5px;"></div>
<div style="left:893px;top:400.5px;width:7px;height:1.5px;background:#141414;"></div>
<svg style="left:890px;top:181px;" width="12" height="12" viewBox="0 0 12 12"><circle cx="6" cy="6" r="5.600" fill="#0c0c0c"/><path d="M6 3.200 L8.900 8 H3.100 Z" fill="#adadad" transform="rotate(0 6 6)"/></svg>
<svg style="left:890px;top:666px;" width="12" height="12" viewBox="0 0 12 12"><circle cx="6" cy="6" r="5.600" fill="#0c0c0c"/><path d="M6 3.200 L8.900 8 H3.100 Z" fill="#adadad" transform="rotate(180 6 6)"/></svg>
<svg style="left:890px;top:683px;" width="13" height="33" viewBox="0 0 13 33"><path d="M2 6.400 H11 M6.500 1.900 V10.900" stroke="#b2b2b2" stroke-width="3"/><path d="M2 17.200 H11" stroke="#2a2a2a" stroke-width="1.600"/><path d="M2 27.600 H11" stroke="#b2b2b2" stroke-width="3"/></svg>
<div style="left:400px;top:719px;width:505px;height:19px;background:#333;"></div>
<svg style="left:402.5px;top:721.4px;" width="12" height="12" viewBox="0 0 12 12"><circle cx="6" cy="6" r="5.600" fill="#0c0c0c"/><path d="M6 3.200 L8.900 8 H3.100 Z" fill="#adadad" transform="rotate(270 6 6)"/></svg>
<svg style="left:835px;top:721.4px;" width="12" height="12" viewBox="0 0 12 12"><circle cx="6" cy="6" r="5.600" fill="#0c0c0c"/><path d="M6 3.200 L8.900 8 H3.100 Z" fill="#adadad" transform="rotate(90 6 6)"/></svg>
<div style="left:456px;top:722px;width:85px;height:11.4px;background:#5c5c5c;border-radius:5.7px;"></div>
<svg style="left:456px;top:722px;" width="85" height="12" viewBox="0 0 85 12"><circle cx="5.600" cy="5.500" r="2.500" fill="#111"/><circle cx="79.400" cy="5.500" r="2.500" fill="#111"/><path d="M42 2 V9" stroke="#111" stroke-width="1.600"/></svg>
<svg style="left:851px;top:720px;" width="36" height="15" viewBox="0 0 36 15"><path d="M3 7.500 H12 M7.500 3 V12" stroke="#b2b2b2" stroke-width="3"/><path d="M17.800 3 V12" stroke="#2a2a2a" stroke-width="1.800"/><path d="M24 7.500 H33" stroke="#b2b2b2" stroke-width="3"/></svg>
<div style="left:1037px;top:105px;width:6px;height:126px;background:#7b8586;"></div>
<div style="left:1039.5px;top:107px;width:1.2px;height:122px;background:#2a2e2e;"></div>
<svg style="left:915px;top:124px;" width="28" height="28" viewBox="0 0 28 28"><rect x="0" y="0" width="28" height="28" fill="#2d4b46"/><path d="M16.6 4.400 V15.600" stroke="#1dc2a0" stroke-width="1.1" stroke-dasharray="1.6 1.2"/><path d="M20.6 4.400 V15.600" stroke="#1dc2a0" stroke-width="1.1" stroke-dasharray="1.6 1.2"/><path d="M24.6 4.400 V15.600" stroke="#1dc2a0" stroke-width="1.1" stroke-dasharray="1.6 1.2"/><ellipse cx="8.600" cy="22" rx="3.800" ry="2.300" fill="#3fb59c"/><ellipse cx="8.600" cy="22" rx="1.500" ry="1" fill="#2d4b46"/></svg>
<svg style="left:945px;top:124px;" width="28" height="28" viewBox="0 0 28 28"><circle cx="12.400" cy="12.300" r="4.300" stroke="#868c8c" stroke-width="1.200" fill="none"/><path d="M10.400 12.300 H14.400" stroke="#d04a6a" stroke-width="1.300"/><path d="M9.300 9.200 L4.600 4.400 M15.600 9.300 L23.400 4.400 M9.300 15.400 L4.600 23.300" stroke="#868c8c" stroke-width="1.200"/><path d="M15.600 15.400 L23 23" stroke="#868c8c" stroke-width="2"/><path d="M3 2.800 L7.600 4 L4.200 7.400 Z M25.200 2.800 L24.200 7.400 L20.600 4 Z M3 24.900 L4 20.300 L7.600 23.700 Z M25.200 25 L20.600 23.800 L24 20.400 Z" fill="#868c8c"/></svg>
<svg style="left:975px;top:124px;" width="28" height="28" viewBox="0 0 28 28"><circle cx="14.400" cy="8.800" r="4.300" stroke="#868c8c" stroke-width="1.200" fill="none"/><path d="M12 8.800 H16.800 M14.400 6.400 V11.200" stroke="#3fb59c" stroke-width="1.200"/><path d="M17.600 12 L22.400 16.800" stroke="#868c8c" stroke-width="2"/><rect x="4" y="18" width="12" height="5.400" fill="#3fb59c"/><path d="M4 16.400 H16" stroke="#868c8c" stroke-width="0.800" stroke-dasharray="0.800 5"/></svg>
<svg style="left:1005px;top:124px;" width="28" height="28" viewBox="0 0 28 28"><rect x="3.2" y="11.2" width="10.8" height="14.4" rx="1" fill="#6e7474" stroke="#868c8c" stroke-width="1.200"/><circle cx="8.600000000000001" cy="17.247999999999998" r="3.6720000000000006" stroke="#333" stroke-width="1.100" fill="none"/><circle cx="8.600000000000001" cy="17.247999999999998" r="1" fill="#868c8c"/><path d="M9.896 19.12 L6.44 23.584" stroke="#868c8c" stroke-width="1.300"/><rect x="4.800000000000001" y="22.200000000000003" width="3" height="1.800" fill="#868c8c"/><circle cx="19.600" cy="8.400" r="5.600" fill="#868c8c"/><path d="M18.400 7.200 H19.800 V11.200 M18.200 11.400 H21.200" stroke="#333" stroke-width="1.100" fill="none"/><rect x="18.800" y="4.600" width="1.300" height="1.300" fill="#333"/></svg>
<svg style="left:915px;top:154px;" width="28" height="28" viewBox="0 0 28 28"><rect x="2" y="3.400" width="10.800" height="14.400" rx="1" fill="#3fb59c"/><circle cx="7.400" cy="9.600" r="3.800" stroke="#2a4a44" stroke-width="1.100" fill="none"/><circle cx="7.400" cy="9.600" r="1" fill="#2a4a44"/><path d="M9 11.400 L5 15.600" stroke="#2a4a44" stroke-width="1.300"/><rect x="15" y="3.400" width="10.800" height="14.400" rx="1" fill="#6a7070"/><circle cx="20.400" cy="9.600" r="3.800" stroke="#333" stroke-width="1.100" fill="none"/><circle cx="20.400" cy="9.600" r="1" fill="#333"/><path d="M22 11.400 L18 15.600" stroke="#333" stroke-width="1.300"/></svg>
<div id="t90" class="t" style="top:171.4px;font:bold 8px/12px 'Liberation Mono',monospace;color:#3fb59c;white-space:nowrap;left:772.3px;width:300px;text-align:center;">1</div>
<div id="t91" class="t" style="top:171.4px;font:normal 8px/12px 'Liberation Mono',monospace;color:#868c8c;white-space:nowrap;left:785px;width:300px;text-align:center;">2</div>
<svg style="left:945px;top:154px;" width="28" height="28" viewBox="0 0 28 28"><g transform="translate(3.5,0)"><rect x="10.300" y="6.200" width="7.300" height="4.700" fill="#3fb59c"/><rect x="5.500" y="6.600" width="4.800" height="4" fill="#868c8c"/><rect x="17.600" y="6.600" width="4" height="4" fill="#868c8c"/><path d="M10.200 3.400 V13.600 M17.400 3.400 V13.600" stroke="#868c8c" stroke-width="0.800" stroke-dasharray="1.400 1"/><path d="M0.400 18.600 L1.600 14.400 L3.200 25 L5 15.800 L6.600 21.400 L8 18.400 L9.600 20.600 L11.200 19.200 L13 20" stroke="#868c8c" stroke-width="1" fill="none"/><path d="M14 13.800 C14.400 17.600 22.400 15.600 22.200 20 C22 22.600 19.400 22.800 17.600 22.600" stroke="#868c8c" stroke-width="1.100" fill="none"/><path d="M18.400 20 L15 22.600 L18.600 25 Z" fill="#868c8c"/></g></svg>
<svg style="left:975px;top:154px;" width="28" height="28" viewBox="0 0 28 28"><rect x="3.2" y="5.1" width="2.8" height="2.800" fill="#5c6262"/><rect x="7.4" y="5.1" width="2.8" height="2.800" fill="#5c6262"/><rect x="11.5" y="5.1" width="5.4" height="2.800" fill="#5c6262"/><rect x="3.2" y="9.3" width="2.8" height="2.800" fill="#5c6262"/><rect x="7.4" y="9.3" width="2.8" height="2.800" fill="#3fb59c"/><rect x="11.5" y="9.3" width="5.4" height="2.800" fill="#3fb59c"/><rect x="3.2" y="13.2" width="2.8" height="2.800" fill="#8a9090"/><rect x="7.4" y="13.2" width="2.8" height="2.800" fill="#8a9090"/><rect x="11.5" y="13.2" width="5.4" height="2.800" fill="#8a9090"/><rect x="3.2" y="17" width="2.8" height="2.800" fill="#5c6262"/><rect x="7.4" y="17" width="2.8" height="2.800" fill="#5c6262"/><rect x="11.5" y="17" width="5.4" height="2.800" fill="#5c6262"/><rect x="7.4" y="21.1" width="2.8" height="2.800" fill="#5c6262"/><rect x="11.5" y="21.1" width="5.4" height="2.800" fill="#5c6262"/><path d="M22.600 9.100 L26.300 13.500 H24.200 V17 H21 V13.500 H18.900 Z" fill="#3fb59c"/></svg>
<svg style="left:1005px;top:154px;" width="28" height="28" viewBox="0 0 28 28"><g transform="translate(-3,0)"><path d="M14 7.200 C17 3 24 3 27.400 7.200 C24 11.400 17 11.400 14 7.200 Z" stroke="#3fb59c" stroke-width="1.300" fill="none"/><circle cx="20.600" cy="7" r="2.800" fill="#3fb59c"/><path d="M7 13.600 H18.600 M7 17.800 H18.600 M7 22 H18.600" stroke="#868c8c" stroke-width="1.100"/><rect x="11.600" y="12.200" width="2.600" height="2.800" fill="#868c8c"/><rect x="15" y="16.400" width="2.600" height="2.800" fill="#868c8c"/><rect x="8.600" y="20.600" width="2.600" height="2.800" fill="#868c8c"/></g></svg>
<div id="quit" class="t" style="top:190.9px;font:normal 11px/15px 'Liberation Sans',sans-serif;color:#b8b8b8;white-space:nowrap;left:808.3px;width:300px;text-align:center;transform:scaleX(0.8751);transform-origin:50% 50%;">QUIT</div>
<svg style="left:975px;top:184px;" width="28" height="28" viewBox="0 0 28 28"><path d="M4 5.600 V22.400 H8 V16 H7 V5.600 Z M9 16 V22.400 H13 V16 H12 V5.600 H10 V16 Z M14 16 V22.400 H18 V16 H17 V5.600 H15 V16 Z M19 16 V22.400 H23 V5.600 H20 V16 Z" fill="#868c8c"/></svg>
<svg style="left:1005px;top:184px;" width="28" height="28" viewBox="0 0 28 28"><path d="M8 5.600 L20.800 14 L8 22.400 Z" fill="#868c8c"/></svg>
<div style="left:911px;top:237px;width:131.5px;height:195px;background:#262626;"></div>
<div style="left:911px;top:238px;width:125.5px;height:85px;background:#000;border:2px solid #73672a;border-radius:2.5px;"></div>
<div style="left:911px;top:238px;width:125.5px;height:17px;background:#73672a;border-radius:2.5px 2.5px 0 0;"></div>
<div id="fsa" class="t" style="top:238.85px;font:normal 11.5px/15.5px 'Liberation Sans',sans-serif;color:#f0cc18;white-space:nowrap;left:914.7px;transform:scaleX(0.8917);transform-origin:0 50%;">Frequency Spectrum Anal</div>
<div id="t94" class="t" style="top:254.7px;font:bold 10px/14px 'Liberation Mono',monospace;color:#545454;white-space:nowrap;left:913.3px;transform:scaleX(1.3);transform-origin:0 50%;">FFT 1024</div>
<div id="t95" class="t" style="top:262.6px;font:bold 10px/14px 'Liberation Mono',monospace;color:#545454;white-space:nowrap;left:913.3px;transform:scaleX(1.3);transform-origin:0 50%;">-120dB f</div>
<div style="left:1037.8px;top:237px;width:3px;height:87.5px;background:#3a3a3a;"></div>
<div style="left:1038px;top:237.5px;width:2.6px;height:28px;background:#666;"></div>
<div style="left:926px;top:329px;width:115px;height:11px;background:#9a9a9a;border-radius:0 3px 0 0;"></div>
<div style="left:926px;top:340px;width:115px;height:10.6px;background:#2b9c88;border-radius:0 0 3px 0;"></div>
<div id="pnFr" class="t" style="top:327.75px;font:normal 10.5px/14.5px 'Liberation Sans',sans-serif;color:#1e1e1e;white-space:nowrap;left:936.8px;transform:scaleX(0.9424);transform-origin:0 50%;">Freq-High Pass 1</div>
<div id="pv50" class="t" style="top:338.65px;font:normal 10.5px/14.5px 'Liberation Sans',sans-serif;color:#101010;white-space:nowrap;left:936.8px;transform:scaleX(0.9396);transform-origin:0 50%;">50.0 Hz</div>
<svg style="left:911px;top:328.5px;" width="24" height="23" viewBox="0 0 24 23"><circle cx="11.600" cy="11.600" r="10.400" fill="#262626"/><circle cx="11.600" cy="11.600" r="4.200" fill="#2ea893"/><circle cx="5.800" cy="17.400" r="1.700" fill="#f4f4f4"/></svg>
<div style="left:926px;top:353px;width:115px;height:11px;background:#9a9a9a;border-radius:0 3px 0 0;"></div>
<div style="left:926px;top:364px;width:115px;height:10.6px;background:#2b9c88;border-radius:0 0 3px 0;"></div>
<div id="pnBW" class="t" style="top:351.75px;font:normal 10.5px/14.5px 'Liberation Sans',sans-serif;color:#1e1e1e;white-space:nowrap;left:936.8px;transform:scaleX(0.937);transform-origin:0 50%;">BW-High Pass 1</div>
<div id="pv2." class="t" style="top:362.65px;font:normal 10.5px/14.5px 'Liberation Sans',sans-serif;color:#101010;white-space:nowrap;left:936.8px;transform:scaleX(1.0031);transform-origin:0 50%;">2.00</div>
<svg style="left:911px;top:352.5px;" width="24" height="23" viewBox="0 0 24 23"><circle cx="11.600" cy="11.600" r="10.400" fill="#262626"/><path d="M5.200 17.600 A9 9 0 0 1 10 2.600" stroke="#f2f2f2" stroke-width="1.700" fill="none"/><circle cx="11.600" cy="11.600" r="4.200" fill="#2ea893"/><circle cx="10.400" cy="2.800" r="1.600" fill="#f4f4f4"/></svg>
<svg style="left:916px;top:382.7px;" width="12" height="18" viewBox="0 0 12 18"><circle cx="6" cy="5" r="3.900" fill="#8a8a8a"/><circle cx="4.200" cy="13.400" r="1.500" fill="#4e4e4e"/></svg>
<svg style="left:916px;top:406.7px;" width="12" height="18" viewBox="0 0 12 18"><circle cx="6" cy="5" r="3.900" fill="#8a8a8a"/><circle cx="4.200" cy="13.400" r="1.500" fill="#4e4e4e"/></svg>
<div style="left:934px;top:430px;width:84px;height:1px;background:#4a4a4a;"></div>
<div id="center" class="t" style="top:435.6px;font:normal 11px/15px 'Liberation Sans',sans-serif;color:#dcdcdc;white-space:nowrap;left:810.4px;width:300px;text-align:center;transform:scaleX(1.0138);transform-origin:50% 50%;">center</div>
<svg style="left:949px;top:448px;" width="24" height="24" viewBox="0 0 24 24"><circle cx="11.900" cy="12.400" r="10" fill="#161616"/><circle cx="11.900" cy="11.700" r="9.300" fill="url(#kpan2)" stroke="#222" stroke-width="0.800"/><circle cx="11.900" cy="5.600" r="1.400" fill="#111"/><defs><linearGradient id="kpan2" x1="0" y1="0" x2="0" y2="1"><stop offset="0" stop-color="#d2d6d5"/><stop offset="1" stop-color="#7c8483"/></linearGradient><linearGradient id="gfd" x1="0" y1="0" x2="0" y2="1"><stop offset="0" stop-color="#f4f6f6"/><stop offset="0.120" stop-color="#b8c0be"/><stop offset="0.220" stop-color="#5e6a66"/><stop offset="0.460" stop-color="#6e7a76"/><stop offset="0.490" stop-color="#1a1a1a"/><stop offset="0.540" stop-color="#f0e8ec"/><stop offset="0.800" stop-color="#8e7a84"/><stop offset="0.900" stop-color="#d8ccd2"/><stop offset="1" stop-color="#5a4a52"/></linearGradient></defs></svg>
<div style="left:917px;top:478.4px;width:94px;height:183.6px;background:#262626;"></div>
<div id="db" class="t" style="top:480.75px;font:normal 10.5px/14.5px 'Liberation Sans',sans-serif;color:#a8a8a8;white-space:nowrap;left:813.9px;width:300px;text-align:center;transform:scaleX(0.9516);transform-origin:50% 50%;">-7.09dB</div>
<div id="inf1" class="t" style="top:496.9px;font:normal 10px/14px 'Liberation Sans',sans-serif;color:#a8a8a8;white-space:nowrap;left:784.9px;width:300px;text-align:center;transform:scaleX(1);transform-origin:50% 50%;letter-spacing:0.273px;">-inf</div>
<div id="inf2" class="t" style="top:496.9px;font:normal 10px/14px 'Liberation Sans',sans-serif;color:#a8a8a8;white-space:nowrap;left:819.7px;width:300px;text-align:center;transform:scaleX(1);transform-origin:50% 50%;letter-spacing:0.273px;">-inf</div>
<div id="t104" class="t" style="top:508.25px;font:normal 9.5px/13.5px 'Liberation Sans',sans-serif;color:#6c6c6c;white-space:nowrap;left:917.8px;">12</div>
<div id="t105" class="t" style="top:508.25px;font:normal 9.5px/13.5px 'Liberation Sans',sans-serif;color:#6c6c6c;white-space:nowrap;right:208.70000000000005px;">12</div>
<div id="t106" class="t" style="top:519.75px;font:normal 9.5px/13.5px 'Liberation Sans',sans-serif;color:#6c6c6c;white-space:nowrap;left:917.8px;">6</div>
<div id="t107" class="t" style="top:519.75px;font:normal 9.5px/13.5px 'Liberation Sans',sans-serif;color:#6c6c6c;white-space:nowrap;right:208.70000000000005px;">6</div>
<div id="t108" class="t" style="top:531.25px;font:normal 9.5px/13.5px 'Liberation Sans',sans-serif;color:#6c6c6c;white-space:nowrap;left:917.8px;">0-</div>
<div id="t109" class="t" style="top:531.25px;font:normal 9.5px/13.5px 'Liberation Sans',sans-serif;color:#6c6c6c;white-space:nowrap;right:208.70000000000005px;">-0</div>
<div id="t110" class="t" style="top:542.75px;font:normal 9.5px/13.5px 'Liberation Sans',sans-serif;color:#6c6c6c;white-space:nowrap;left:917.8px;">6-</div>
<div id="t111" class="t" style="top:542.75px;font:normal 9.5px/13.5px 'Liberation Sans',sans-serif;color:#6c6c6c;white-space:nowrap;right:208.70000000000005px;">-6</div>
<div id="t112" class="t" style="top:554.25px;font:normal 9.5px/13.5px 'Liberation Sans',sans-serif;color:#6c6c6c;white-space:nowrap;left:917.8px;">12-</div>
<div id="t113" class="t" style="top:554.25px;font:normal 9.5px/13.5px 'Liberation Sans',sans-serif;color:#6c6c6c;white-space:nowrap;right:208.70000000000005px;">-12</div>
<div id="t114" class="t" style="top:565.75px;font:normal 9.5px/13.5px 'Liberation Sans',sans-serif;color:#6c6c6c;white-space:nowrap;left:917.8px;">18-</div>
<div id="t115" class="t" style="top:565.75px;font:normal 9.5px/13.5px 'Liberation Sans',sans-serif;color:#6c6c6c;white-space:nowrap;right:208.70000000000005px;">-18</div>
<div id="t116" class="t" style="top:577.25px;font:normal 9.5px/13.5px 'Liberation Sans',sans-serif;color:#6c6c6c;white-space:nowrap;left:917.8px;">24-</div>
<div id="t117" class="t" style="top:577.25px;font:normal 9.5px/13.5px 'Liberation Sans',sans-serif;color:#6c6c6c;white-space:nowrap;right:208.70000000000005px;">-24</div>
<div id="t118" class="t" style="top:588.75px;font:normal 9.5px/13.5px 'Liberation Sans',sans-serif;color:#6c6c6c;white-space:nowrap;left:917.8px;">30-</div>
<div id="t119" class="t" style="top:588.75px;font:normal 9.5px/13.5px 'Liberation Sans',sans-serif;color:#6c6c6c;white-space:nowrap;right:208.70000000000005px;">-30</div>
<div id="t120" class="t" style="top:600.25px;font:normal 9.5px/13.5px 'Liberation Sans',sans-serif;color:#6c6c6c;white-space:nowrap;left:917.8px;">36-</div>
<div id="t121" class="t" style="top:600.25px;font:normal 9.5px/13.5px 'Liberation Sans',sans-serif;color:#6c6c6c;white-space:nowrap;right:208.70000000000005px;">-36</div>
<div id="t122" class="t" style="top:611.75px;font:normal 9.5px/13.5px 'Liberation Sans',sans-serif;color:#6c6c6c;white-space:nowrap;left:917.8px;">42-</div>
<div id="t123" class="t" style="top:611.75px;font:normal 9.5px/13.5px 'Liberation Sans',sans-serif;color:#6c6c6c;white-space:nowrap;right:208.70000000000005px;">-42</div>
<div id="t124" class="t" style="top:514.95px;font:normal 9.5px/13.5px 'Liberation Sans',sans-serif;color:#6c6c6c;white-space:nowrap;left:802.3px;width:300px;text-align:center;">-6-</div>
<div id="t125" class="t" style="top:538.2px;font:normal 9.5px/13.5px 'Liberation Sans',sans-serif;color:#6c6c6c;white-space:nowrap;left:802.3px;width:300px;text-align:center;">-18-</div>
<div id="t126" class="t" style="top:561.45px;font:normal 9.5px/13.5px 'Liberation Sans',sans-serif;color:#6c6c6c;white-space:nowrap;left:802.3px;width:300px;text-align:center;">-30-</div>
<div id="t127" class="t" style="top:584.7px;font:normal 9.5px/13.5px 'Liberation Sans',sans-serif;color:#6c6c6c;white-space:nowrap;left:802.3px;width:300px;text-align:center;">-42-</div>
<div id="t128" class="t" style="top:607.95px;font:normal 9.5px/13.5px 'Liberation Sans',sans-serif;color:#6c6c6c;white-space:nowrap;left:802.3px;width:300px;text-align:center;">-54-</div>
<div style="left:998px;top:507px;width:2px;height:126px;background:#0a0a0a;"></div>
<svg style="left:988px;top:540px;" width="22" height="46" viewBox="0 0 22 46"><rect x="0.800" y="1.600" width="20.400" height="43.600" rx="6" fill="#111"/><rect x="1.200" y="1" width="19.600" height="43" rx="6" fill="url(#gfd)"/></svg>
<div style="left:917px;top:630px;width:70px;height:11.6px;background:#202020;"></div>
<div id="ls" class="t" style="top:629.2px;font:normal 10px/14px 'Liberation Sans',sans-serif;color:#2fb06a;white-space:nowrap;left:784.5px;width:300px;text-align:center;transform:scaleX(0.9639);transform-origin:50% 50%;">L-S</div>
<div id="inf3" class="t" style="top:629.2px;font:normal 10px/14px 'Liberation Sans',sans-serif;color:#2fb06a;white-space:nowrap;left:819.5px;width:300px;text-align:center;transform:scaleX(1);transform-origin:50% 50%;letter-spacing:0.523px;">-inf</div>
<div id="master" class="t" style="top:644.0px;font:normal 12px/16px 'Liberation Sans',sans-serif;color:#ececec;white-space:nowrap;left:813.6px;width:300px;text-align:center;transform:scaleX(0.8597);transform-origin:50% 50%;">MASTER</div>
<svg style="left:1008px;top:649px;" width="6" height="6" viewBox="0 0 6 6"><circle cx="3" cy="3" r="2.600" fill="#2a2a2a"/></svg>
<svg width="0" height="0" style="left:0;top:0"><defs><linearGradient id="ggb" x1="0" y1="0" x2="0" y2="1"><stop offset="0" stop-color="#8c9191"/><stop offset="1" stop-color="#666b6b"/></linearGradient><linearGradient id="gms2" x1="0" y1="0" x2="0" y2="1"><stop offset="0" stop-color="#3c3c3c"/><stop offset="1" stop-color="#242424"/></linearGradient></defs></svg>
<svg style="left:1017px;top:438px;" width="21" height="21.4" viewBox="0 0 21 21.4"><rect x="0.300" y="1.200" width="19.800" height="19.4" rx="2" fill="#0c0c0c" opacity="0.800"/><rect x="0.500" y="0.500" width="19.400" height="18.599999999999998" rx="1.800" fill="url(#ggb)" stroke="#141414" stroke-width="1"/><circle cx="8" cy="9.600" r="3.800" stroke="#5c6262" stroke-width="1.100" fill="none"/><circle cx="12.200" cy="9.600" r="3.800" stroke="#5c6262" stroke-width="1.100" fill="none"/></svg>
<div id="t132" class="t" style="top:458.1px;font:bold 11px/15px 'Liberation Sans',sans-serif;color:#a4a4a4;white-space:nowrap;left:877px;width:300px;text-align:center;transform:scaleX(0.6);transform-origin:50% 50%;">MONO</div>
<svg style="left:1017px;top:474px;" width="21" height="21.6" viewBox="0 0 21 21.6"><rect x="0.300" y="1.200" width="19.800" height="19.6" rx="2" fill="#0c0c0c" opacity="0.800"/><rect x="0.500" y="0.500" width="19.400" height="18.8" rx="1.800" fill="url(#gms2)" stroke="#141414" stroke-width="1"/></svg>
<div id="t133" class="t" style="top:476.7px;font:normal 11px/15px 'DejaVu Sans','Liberation Sans',sans-serif;color:#e46a5e;white-space:nowrap;left:876.8px;width:300px;text-align:center;">M</div>
<svg style="left:1017px;top:494px;" width="21" height="21.6" viewBox="0 0 21 21.6"><rect x="0.300" y="1.200" width="19.800" height="19.6" rx="2" fill="#0c0c0c" opacity="0.800"/><rect x="0.500" y="0.500" width="19.400" height="18.8" rx="1.800" fill="url(#gms2)" stroke="#141414" stroke-width="1"/></svg>
<div id="t134" class="t" style="top:496.7px;font:normal 11px/15px 'DejaVu Sans','Liberation Sans',sans-serif;color:#e0c050;white-space:nowrap;left:876.8px;width:300px;text-align:center;">S</div>
<svg style="left:1017px;top:520.5px;" width="21" height="21.5" viewBox="0 0 21 21.5"><rect x="0.300" y="1.200" width="19.800" height="19.5" rx="2" fill="#0c0c0c" opacity="0.800"/><rect x="0.500" y="0.500" width="19.400" height="18.7" rx="1.800" fill="#34403e" stroke="#141414" stroke-width="1"/><path d="M3.400 18.200 L8 1.400 H11.400 L6.800 18.200 Z" fill="#24c0a0"/><path d="M8.800 18.200 L13.400 1.400 H16.800 L12.200 18.200 Z" fill="#e8d01c"/><path d="M14.200 18.200 L18.600 2.400 V18.200 Z" fill="#3a5a66"/></svg>
<div id="t135" class="t" style="top:540.2px;font:bold 11px/15px 'Liberation Sans',sans-serif;color:#b0b0b0;white-space:nowrap;left:877px;width:300px;text-align:center;transform:scaleX(0.6);transform-origin:50% 50%;">ROUTE</div>
<svg style="left:1017px;top:558.5px;" width="21" height="36.5" viewBox="0 0 21 36.5"><rect x="0.300" y="1.200" width="19.800" height="34.5" rx="2" fill="#0c0c0c" opacity="0.800"/><rect x="0.500" y="0.500" width="19.400" height="33.7" rx="1.800" fill="#2c8f66" stroke="#141414" stroke-width="1"/><rect x="1" y="17.600" width="18" height="16" fill="#36ba80"/><path d="M7.600 23.600 A3.400 3.400 0 1 0 12.400 23.600" stroke="#14503a" stroke-width="1.300" fill="none"/><path d="M10 21.800 V26" stroke="#14503a" stroke-width="1.300"/></svg>
<div id="t136" class="t" style="top:560.25px;font:normal 11.5px/15.5px 'Liberation Sans',sans-serif;color:#b8f0d8;white-space:nowrap;left:877px;width:300px;text-align:center;transform:scaleX(0.85);transform-origin:50% 50%;">FX</div>
<svg style="left:1017px;top:600.2px;" width="21" height="21.4" viewBox="0 0 21 21.4"><rect x="0.300" y="1.200" width="19.800" height="19.4" rx="2" fill="#0c0c0c" opacity="0.800"/><rect x="0.500" y="0.500" width="19.400" height="18.599999999999998" rx="1.800" fill="url(#ggb)" stroke="#141414" stroke-width="1"/><path d="M5 13 L10 6.600 L15 12.400" stroke="#2c3030" stroke-width="1.400" fill="none"/><circle cx="5" cy="13" r="1.800" fill="#2c3030"/><circle cx="10" cy="6.400" r="2" fill="#2c3030"/><circle cx="15" cy="12.600" r="1.800" fill="#2c3030"/></svg>
<div id="t137" class="t" style="top:620.7px;font:bold 11px/15px 'Liberation Sans',sans-serif;color:#a4a4a4;white-space:nowrap;left:877px;width:300px;text-align:center;transform:scaleX(0.6);transform-origin:50% 50%;">TRIM</div>
<div style="left:911px;top:662px;width:132px;height:6.4px;background:#7b8586;"></div>
<div style="left:913px;top:664.6px;width:126px;height:1.2px;background:#2a2e2e;"></div>
<div style="left:911px;top:674px;width:126px;height:64px;background:#adb1b0;"></div>
<div style="left:1037px;top:674px;width:6px;height:64px;background:#7b8586;"></div>
<div style="left:1039.4px;top:677.6px;width:1.2px;height:56px;background:#2a2e2e;"></div>
<div id="cpu1" class="t" style="top:678.05px;font:normal 11.5px/15.5px 'Liberation Sans',sans-serif;color:#1c1c2c;white-space:nowrap;left:915.7px;transform:scaleX(0.9352);transform-origin:0 50%;">CPU: 0.28c</div>
<div id="cpu2" class="t" style="top:691.25px;font:normal 11.5px/15.5px 'Liberation Sans',sans-serif;color:#1c1c2c;white-space:nowrap;left:915.7px;transform:scaleX(0.9253);transform-origin:0 50%;">RT CPU: 2.1%</div>
<div id="cpu3" class="t" style="top:704.25px;font:normal 11.5px/15.5px 'Liberation Sans',sans-serif;color:#1c1c2c;white-space:nowrap;left:915.7px;transform:scaleX(0.98);transform-origin:0 50%;">RT x/r: 0 M x/r: 0</div>
</div></div>
</body></html>
